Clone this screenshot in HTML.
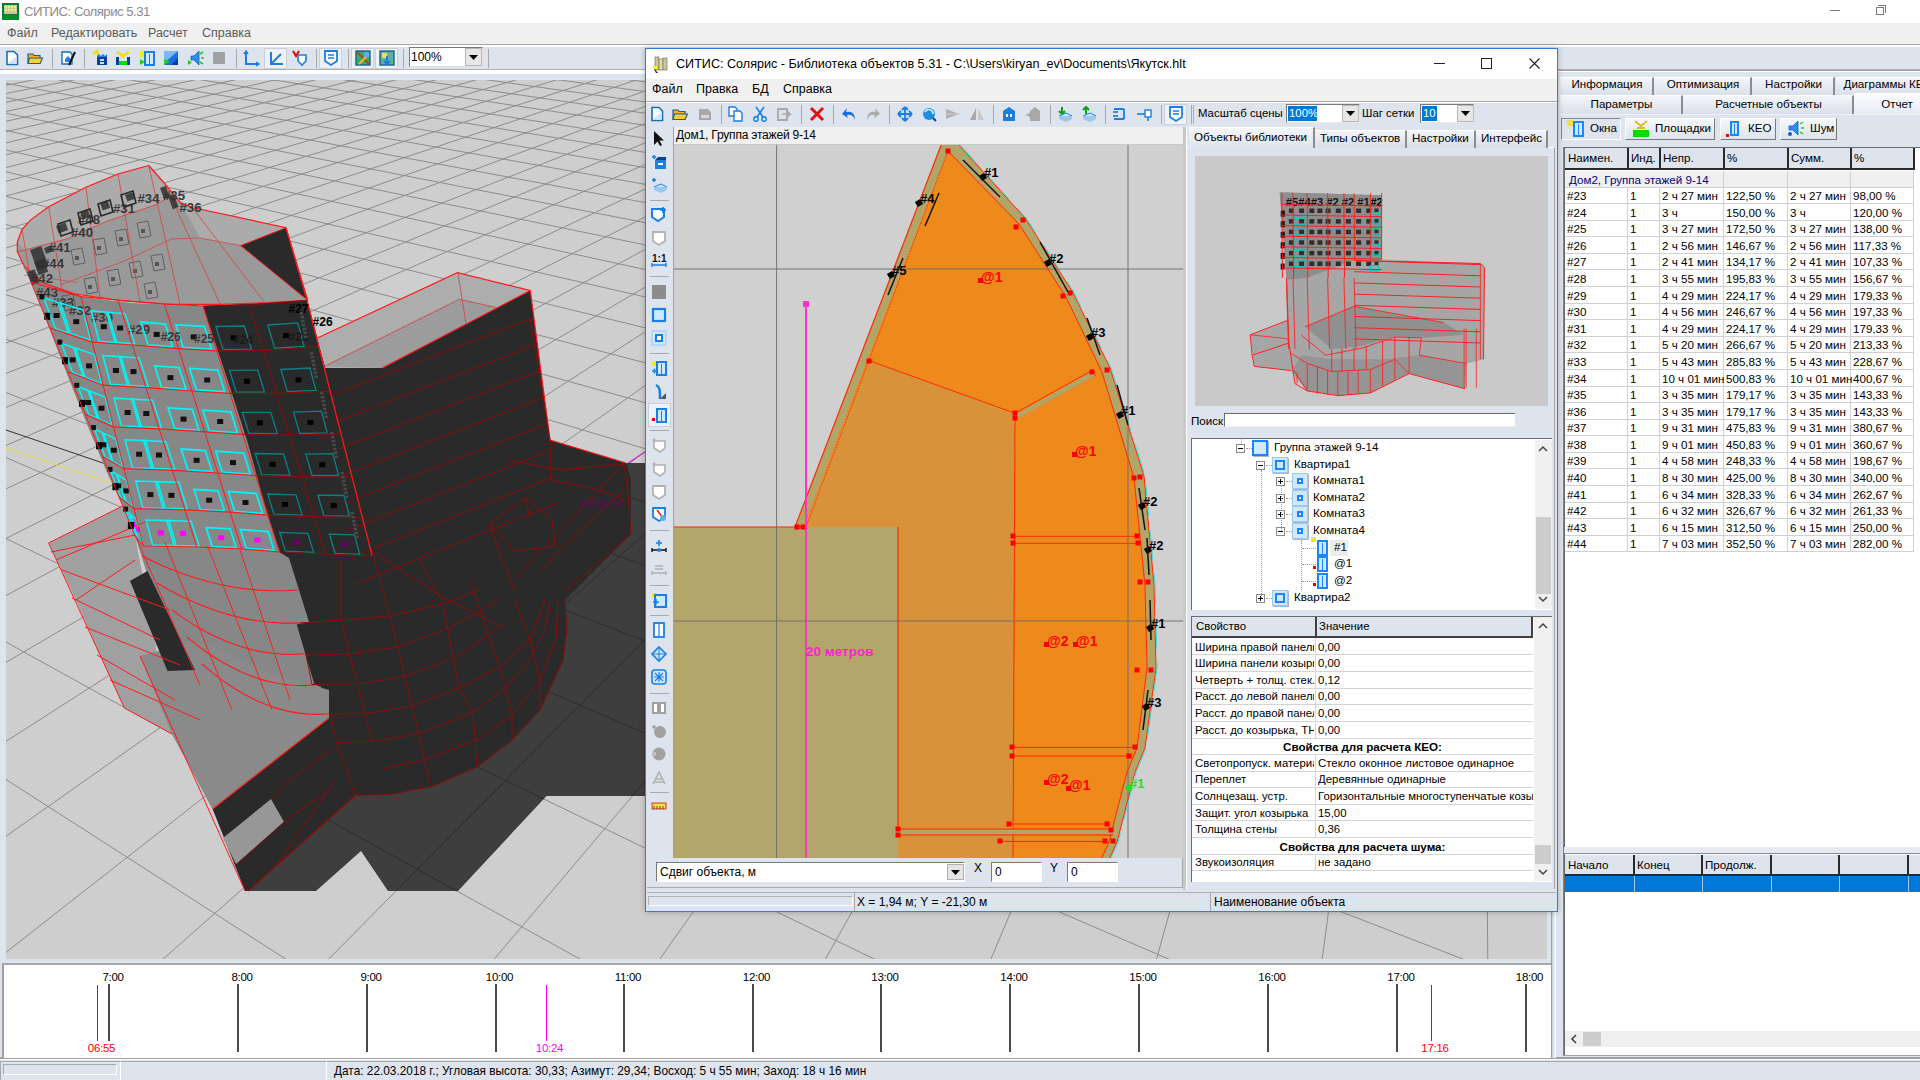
<!DOCTYPE html>
<html><head><meta charset="utf-8"><title>СИТИС: Солярис 5.31</title><style>
*{box-sizing:border-box}
html,body{margin:0;padding:0;width:1920px;height:1080px;overflow:hidden;background:#dde4ee;font-family:"Liberation Sans", sans-serif;font-size:12px;color:#000}
.a{position:absolute}
.t{position:absolute;white-space:nowrap;line-height:1}
svg{position:absolute;overflow:visible}
</style></head>
<body>
<div class="a" style="left:0px;top:0px;width:1920px;height:23px;background:#fff"></div><svg style="left:2px;top:3px" width="18" height="18" viewBox="0 0 18 18"><rect x="0" y="0" width="17" height="17" fill="#0a7a3a"/><rect x="2" y="2" width="13" height="9" fill="#c9c9a0"/><g fill="#f5f06a"><rect x="3" y="3" width="2" height="2"/><rect x="6" y="3" width="2" height="2"/><rect x="9" y="3" width="2" height="2"/><rect x="12" y="3" width="2" height="2"/><rect x="3" y="6" width="2" height="2"/><rect x="6" y="6" width="2" height="2"/><rect x="9" y="6" width="2" height="2"/><rect x="12" y="6" width="2" height="2"/></g><rect x="0" y="12" width="17" height="5" fill="#0c8a2a"/></svg><div class="t" style="left:24px;top:5px;font-size:13.2px;letter-spacing:-0.5px;color:#8c8c8c">СИТИС: Солярис 5.31</div><div class="a" style="left:1830px;top:10px;width:10px;height:1px;background:#777"></div><div class="a" style="left:1876px;top:7px;width:8px;height:8px;border:1px solid #777;background:#fff"></div><div class="a" style="left:1878px;top:5px;width:8px;height:8px;border-top:1px solid #777;border-right:1px solid #777"></div><div class="a" style="left:0px;top:23px;width:1920px;height:21px;background:#f0f0f0"></div><div class="t" style="left:7px;top:27px;font-size:12.5px;color:#5a5a5a">Файл</div><div class="t" style="left:51px;top:27px;font-size:12.5px;color:#5a5a5a">Редактировать</div><div class="t" style="left:148px;top:27px;font-size:12.5px;color:#5a5a5a">Расчет</div><div class="t" style="left:202px;top:27px;font-size:12.5px;color:#5a5a5a">Справка</div><div class="a" style="left:0px;top:44px;width:1920px;height:1px;background:#a8a8a8"></div><div class="a" style="left:0px;top:45px;width:1920px;height:2px;background:#fff"></div><div class="a" style="left:0px;top:47px;width:1920px;height:22px;background:#dde4ee"></div><div class="a" style="left:0px;top:69px;width:1920px;height:1px;background:#b0b0b0"></div><div class="a" style="left:0px;top:70px;width:1920px;height:4px;background:#fff"></div><div class="a" style="left:2px;top:74px;width:1918px;height:986px;background:#dde4ee"></div><div class="a" style="left:0px;top:1057px;width:1920px;height:2px;background:#a0a0a0"></div><div class="a" style="left:0px;top:1059px;width:1920px;height:21px;background:#dde4ee;border-top:1px solid #fff"></div><div class="a" style="left:0px;top:1061px;width:120px;height:19px;border-top:1px solid #a8a8a8;border-left:1px solid #a8a8a8"></div><div class="a" style="left:3px;top:1064px;width:114px;height:11px;border:1px solid #a8a8a8;border-bottom-color:#fff;border-right-color:#fff"></div><div class="a" style="left:120px;top:1061px;width:206px;height:19px;border-top:1px solid #a8a8a8;border-left:1px solid #fff"></div><div class="a" style="left:326px;top:1061px;width:1594px;height:19px;border-top:1px solid #a8a8a8;border-left:1px solid #fff"></div><div class="t" style="left:334px;top:1066px;font-size:11.85px">Дата: 22.03.2018 г.; Угловая высота: 30,33; Азимут: 29,34; Восход: 5 ч 55 мин; Заход: 18 ч 16 мин</div><svg style="left:6px;top:80px" width="1541" height="879" viewBox="0 0 1541 879"><defs><clipPath id="cv"><rect x="0" y="0" width="1541" height="879"/></clipPath></defs><g clip-path="url(#cv)"><rect x="0" y="0" width="1541" height="879" fill="#cecece"/><path d="M1594.3 -140.5L-37429.8 -45302.4M1573.5 -141.4L29966.1 39213.2M1552.9 -142.3L9417.3 13444.8M1532.6 -143.3L5095.4 8025.0M1512.6 -144.2L3220.3 5673.6M1492.8 -145.1L2172.6 4359.7M1473.3 -145.9L1503.6 3520.8M1454.0 -146.8L1039.4 2938.7M1435.0 -147.7L698.5 2511.1M1416.2 -148.5L437.4 2183.8M1397.7 -149.4L231.2 1925.2M1379.4 -150.2L64.1 1715.6M1361.3 -151.0L-74.0 1542.4M1343.4 -151.8L-190.1 1396.9M1325.8 -152.6L-289.0 1272.8M1308.3 -153.4L-374.3 1165.8M1291.1 -154.2L-448.6 1072.6M1274.1 -155.0L-514.0 990.7M1257.3 -155.7L-571.9 918.1M1240.7 -156.5L-623.5 853.4M1224.3 -157.2L-669.8 795.3M1208.1 -157.9L-711.7 742.8M1192.1 -158.7L-749.6 695.2M1176.2 -159.4L-784.2 651.9M1160.6 -160.1L-815.8 612.2M1145.1 -160.8L-844.9 575.7M1129.8 -161.5L-871.7 542.1M1114.7 -162.2L-896.4 511.1M1099.7 -162.8L-919.4 482.3M1085.0 -163.5L-940.8 455.5M1070.3 -164.2L-960.7 430.5M1055.9 -164.8L-979.3 407.2M1041.6 -165.5L-996.7 385.4M1027.5 -166.1L-1013.1 364.9M1013.5 -166.8L-1028.4 345.6M999.6 -167.4L-1042.9 327.4M986.0 -168.0L-1056.6 310.3M972.4 -168.6L-1069.5 294.0M959.0 -169.2L-1081.8 278.7M945.8 -169.8L-1093.4 264.2M932.7 -170.4L-1104.4 250.3M919.7 -171.0L-1114.8 237.2M906.9 -171.6L-1124.8 224.7M894.2 -172.2L-1134.3 212.8M881.6 -172.7L-1143.4 201.4M869.2 -173.3L-1152.0 190.6M856.9 -173.8L-1160.3 180.2M844.7 -174.4L-1168.2 170.3M832.6 -174.9L-1175.8 160.8M820.7 -175.5L-1183.1 151.7M808.9 -176.0L-1190.0 142.9M797.2 -176.5L-1196.7 134.5M785.6 -177.1L-1203.2 126.4M774.1 -177.6L-1209.4 118.6M762.8 -178.1L-1215.4 111.2M751.5 -178.6L-1221.1 104.0M740.4 -179.1L-1226.6 97.0M729.4 -179.6L-1232.0 90.3M718.4 -180.1L-1237.1 83.8M707.6 -180.6L-1242.1 77.6M696.9 -181.1L-1246.9 71.6M686.3 -181.6L-1251.6 65.7M675.8 -182.0L-1256.1 60.1M665.4 -182.5L-1260.5 54.6M655.1 -183.0L-1264.7 49.3M644.9 -183.4L-1268.8 44.2M1594.3 -140.5L634.8 -183.9M1595.8 -138.7L627.8 -183.1M1597.3 -137.0L620.7 -182.2M1598.9 -135.2L613.4 -181.4M1600.5 -133.4L606.1 -180.5M1602.1 -131.5L598.6 -179.7M1603.8 -129.5L591.0 -178.8M1605.5 -127.6L583.3 -177.9M1607.2 -125.5L575.4 -177.0M1609.0 -123.4L567.4 -176.0M1610.9 -121.3L559.2 -175.1M1612.8 -119.1L550.9 -174.1M1614.8 -116.8L542.5 -173.1M1616.8 -114.5L533.8 -172.1M1618.9 -112.1L525.1 -171.1M1621.0 -109.6L516.1 -170.0M1623.2 -107.1L507.0 -169.0M1625.4 -104.4L497.7 -167.9M1627.8 -101.7L488.2 -166.8M1630.2 -99.0L478.6 -165.6M1632.7 -96.1L468.7 -164.5M1635.2 -93.1L458.7 -163.3M1637.9 -90.1L448.4 -162.1M1640.6 -86.9L438.0 -160.9M1643.4 -83.7L427.3 -159.6M1646.3 -80.3L416.4 -158.4M1649.3 -76.8L405.3 -157.1M1652.5 -73.2L393.9 -155.7M1655.7 -69.4L382.3 -154.4M1659.1 -65.6L370.4 -153.0M1662.5 -61.5L358.3 -151.6M1666.1 -57.3L345.9 -150.1M1669.9 -53.0L333.2 -148.6M1673.8 -48.5L320.3 -147.1M1677.8 -43.8L307.0 -145.6M1682.1 -38.9L293.5 -144.0M1686.5 -33.8L279.6 -142.4M1691.0 -28.5L265.4 -140.7M1695.8 -23.0L250.8 -139.0M1700.8 -17.2L235.9 -137.2M1706.1 -11.2L220.6 -135.5M1711.5 -4.8L204.9 -133.6M1717.3 1.8L188.9 -131.7M1723.3 8.8L172.4 -129.8M1729.6 16.1L155.5 -127.8M1736.2 23.8L138.1 -125.8M1743.2 31.9L120.3 -123.7M1750.6 40.4L102.0 -121.6M1758.4 49.4L83.2 -119.4M1766.7 59.0L63.9 -117.1M1775.4 69.1L44.0 -114.8M1784.6 79.8L23.6 -112.4M1794.5 91.2L2.5 -110.0M1805.0 103.3L-19.1 -107.4M1816.2 116.3L-41.4 -104.8M1828.1 130.1L-64.4 -102.1M1841.0 145.0L-88.1 -99.4M1854.8 161.0L-112.5 -96.5M1869.6 178.2L-137.7 -93.6M1885.7 196.7L-163.7 -90.5M1903.1 216.9L-190.6 -87.4M1922.1 238.8L-218.4 -84.1M1942.8 262.8L-247.1 -80.8M1965.5 289.1L-276.8 -77.3M1990.5 318.0L-307.5 -73.7M2018.1 350.0L-339.4 -70.0M2048.9 385.6L-372.4 -66.1M2083.4 425.5L-406.6 -62.1M2122.2 470.5L-442.2 -57.9M2166.3 521.5L-479.1 -53.6M2216.9 580.0L-517.4 -49.1M2275.3 647.6L-557.3 -44.5M2343.7 726.8L-598.8 -39.6M2424.9 820.8L-642.1 -34.6M2522.8 934.0L-687.2 -29.3M2643.0 1073.2L-734.2 -23.8M2794.4 1248.3L-783.4 -18.0M2990.6 1475.4L-834.8 -12.0M3255.3 1781.7L-888.6 -5.7M3631.7 2217.4L-945.0 0.9M4209.6 2886.1L-1004.1 7.8M5209.7 4043.6L-1066.2 15.1M7361.4 6533.7L-1131.5 22.7M15351.9 15780.9L-1200.3 30.7M-37429.8 -45302.4L-1272.7 39.2" stroke="#8c8c8c" stroke-width="1" fill="none"/><polyline points="0.0,368.0 219.0,441.0" fill="none" stroke="#e8e040" stroke-width="1" /><polyline points="0.0,350.0 229.0,428.0" fill="none" stroke="#333" stroke-width="1" /><polyline points="494.0,588.0 639.0,651.0" fill="none" stroke="#1020a0" stroke-width="1.4" /><polyline points="622.0,383.0 639.0,372.0" fill="none" stroke="#e020e0" stroke-width="1.2" /><polygon points="239.0,811.0 310.0,811.0 355.0,771.0 382.0,811.0 452.0,811.0 540.5,716.0 639.0,716.0 639.0,383.0 620.0,383.0 544.0,360.0 524.0,210.0 319.0,288.0 234.0,400.0 274.0,543.0 294.0,660.0" fill="#3e3e3e" /><clipPath id="shc"><polygon points="239.0,811.0 310.0,811.0 355.0,771.0 382.0,811.0 452.0,811.0 540.5,716.0 639.0,716.0 639.0,383.0 620.0,383.0 544.0,360.0 524.0,210.0 319.0,288.0 199.0,226.0"/></clipPath><path d="M1594.3 -140.5L-37429.8 -45302.4M1573.5 -141.4L29966.1 39213.2M1552.9 -142.3L9417.3 13444.8M1532.6 -143.3L5095.4 8025.0M1512.6 -144.2L3220.3 5673.6M1492.8 -145.1L2172.6 4359.7M1473.3 -145.9L1503.6 3520.8M1454.0 -146.8L1039.4 2938.7M1435.0 -147.7L698.5 2511.1M1416.2 -148.5L437.4 2183.8M1397.7 -149.4L231.2 1925.2M1379.4 -150.2L64.1 1715.6M1361.3 -151.0L-74.0 1542.4M1343.4 -151.8L-190.1 1396.9M1325.8 -152.6L-289.0 1272.8M1308.3 -153.4L-374.3 1165.8M1291.1 -154.2L-448.6 1072.6M1274.1 -155.0L-514.0 990.7M1257.3 -155.7L-571.9 918.1M1240.7 -156.5L-623.5 853.4M1224.3 -157.2L-669.8 795.3M1208.1 -157.9L-711.7 742.8M1192.1 -158.7L-749.6 695.2M1176.2 -159.4L-784.2 651.9M1160.6 -160.1L-815.8 612.2M1145.1 -160.8L-844.9 575.7M1129.8 -161.5L-871.7 542.1M1114.7 -162.2L-896.4 511.1M1099.7 -162.8L-919.4 482.3M1085.0 -163.5L-940.8 455.5M1070.3 -164.2L-960.7 430.5M1055.9 -164.8L-979.3 407.2M1041.6 -165.5L-996.7 385.4M1027.5 -166.1L-1013.1 364.9M1013.5 -166.8L-1028.4 345.6M999.6 -167.4L-1042.9 327.4M986.0 -168.0L-1056.6 310.3M972.4 -168.6L-1069.5 294.0M959.0 -169.2L-1081.8 278.7M945.8 -169.8L-1093.4 264.2M932.7 -170.4L-1104.4 250.3M919.7 -171.0L-1114.8 237.2M906.9 -171.6L-1124.8 224.7M894.2 -172.2L-1134.3 212.8M881.6 -172.7L-1143.4 201.4M869.2 -173.3L-1152.0 190.6M856.9 -173.8L-1160.3 180.2M844.7 -174.4L-1168.2 170.3M832.6 -174.9L-1175.8 160.8M820.7 -175.5L-1183.1 151.7M808.9 -176.0L-1190.0 142.9M797.2 -176.5L-1196.7 134.5M785.6 -177.1L-1203.2 126.4M774.1 -177.6L-1209.4 118.6M762.8 -178.1L-1215.4 111.2M751.5 -178.6L-1221.1 104.0M740.4 -179.1L-1226.6 97.0M729.4 -179.6L-1232.0 90.3M718.4 -180.1L-1237.1 83.8M707.6 -180.6L-1242.1 77.6M696.9 -181.1L-1246.9 71.6M686.3 -181.6L-1251.6 65.7M675.8 -182.0L-1256.1 60.1M665.4 -182.5L-1260.5 54.6M655.1 -183.0L-1264.7 49.3M644.9 -183.4L-1268.8 44.2M1594.3 -140.5L634.8 -183.9M1595.8 -138.7L627.8 -183.1M1597.3 -137.0L620.7 -182.2M1598.9 -135.2L613.4 -181.4M1600.5 -133.4L606.1 -180.5M1602.1 -131.5L598.6 -179.7M1603.8 -129.5L591.0 -178.8M1605.5 -127.6L583.3 -177.9M1607.2 -125.5L575.4 -177.0M1609.0 -123.4L567.4 -176.0M1610.9 -121.3L559.2 -175.1M1612.8 -119.1L550.9 -174.1M1614.8 -116.8L542.5 -173.1M1616.8 -114.5L533.8 -172.1M1618.9 -112.1L525.1 -171.1M1621.0 -109.6L516.1 -170.0M1623.2 -107.1L507.0 -169.0M1625.4 -104.4L497.7 -167.9M1627.8 -101.7L488.2 -166.8M1630.2 -99.0L478.6 -165.6M1632.7 -96.1L468.7 -164.5M1635.2 -93.1L458.7 -163.3M1637.9 -90.1L448.4 -162.1M1640.6 -86.9L438.0 -160.9M1643.4 -83.7L427.3 -159.6M1646.3 -80.3L416.4 -158.4M1649.3 -76.8L405.3 -157.1M1652.5 -73.2L393.9 -155.7M1655.7 -69.4L382.3 -154.4M1659.1 -65.6L370.4 -153.0M1662.5 -61.5L358.3 -151.6M1666.1 -57.3L345.9 -150.1M1669.9 -53.0L333.2 -148.6M1673.8 -48.5L320.3 -147.1M1677.8 -43.8L307.0 -145.6M1682.1 -38.9L293.5 -144.0M1686.5 -33.8L279.6 -142.4M1691.0 -28.5L265.4 -140.7M1695.8 -23.0L250.8 -139.0M1700.8 -17.2L235.9 -137.2M1706.1 -11.2L220.6 -135.5M1711.5 -4.8L204.9 -133.6M1717.3 1.8L188.9 -131.7M1723.3 8.8L172.4 -129.8M1729.6 16.1L155.5 -127.8M1736.2 23.8L138.1 -125.8M1743.2 31.9L120.3 -123.7M1750.6 40.4L102.0 -121.6M1758.4 49.4L83.2 -119.4M1766.7 59.0L63.9 -117.1M1775.4 69.1L44.0 -114.8M1784.6 79.8L23.6 -112.4M1794.5 91.2L2.5 -110.0M1805.0 103.3L-19.1 -107.4M1816.2 116.3L-41.4 -104.8M1828.1 130.1L-64.4 -102.1M1841.0 145.0L-88.1 -99.4M1854.8 161.0L-112.5 -96.5M1869.6 178.2L-137.7 -93.6M1885.7 196.7L-163.7 -90.5M1903.1 216.9L-190.6 -87.4M1922.1 238.8L-218.4 -84.1M1942.8 262.8L-247.1 -80.8M1965.5 289.1L-276.8 -77.3M1990.5 318.0L-307.5 -73.7M2018.1 350.0L-339.4 -70.0M2048.9 385.6L-372.4 -66.1M2083.4 425.5L-406.6 -62.1M2122.2 470.5L-442.2 -57.9M2166.3 521.5L-479.1 -53.6M2216.9 580.0L-517.4 -49.1M2275.3 647.6L-557.3 -44.5M2343.7 726.8L-598.8 -39.6M2424.9 820.8L-642.1 -34.6M2522.8 934.0L-687.2 -29.3M2643.0 1073.2L-734.2 -23.8M2794.4 1248.3L-783.4 -18.0M2990.6 1475.4L-834.8 -12.0M3255.3 1781.7L-888.6 -5.7M3631.7 2217.4L-945.0 0.9M4209.6 2886.1L-1004.1 7.8M5209.7 4043.6L-1066.2 15.1M7361.4 6533.7L-1131.5 22.7M15351.9 15780.9L-1200.3 30.7M-37429.8 -45302.4L-1272.7 39.2" stroke="#2c2c2c" stroke-width="1" fill="none" clip-path="url(#shc)"/><polygon points="197.0,226.0 301.0,220.0 319.5,288.0 376.0,288.0 524.3,210.5 544.0,360.0 620.0,383.0 625.0,400.0 625.0,454.0 559.0,520.0 561.0,550.0 557.0,581.0 534.0,630.0 506.0,660.5 471.0,687.0 426.4,706.4 383.6,714.5 349.0,715.5 242.0,811.0 239.0,811.0 206.6,729.0 294.0,660.0 274.0,543.0 234.0,400.0 197.0,226.0" fill="#2a2a2a" /><polygon points="42.6,463.0 116.7,426.0 129.0,455.0 166.0,654.0 118.4,628.0 94.0,575.0 70.0,520.0" fill="#a0a0a0" /><polygon points="17.0,186.0 25.0,202.0 41.8,244.4 60.3,292.6 82.5,348.0 101.0,392.6 116.7,426.0 131.0,462.0 142.0,497.0 154.0,530.0 166.0,654.0 206.6,729.0 323.0,638.0 323.0,634.4 315.0,606.7 308.4,604.4 290.7,544.4 303.0,542.0 283.0,478.0 274.0,472.5 261.5,435.0 246.5,380.0 241.8,363.0 227.0,316.7 213.0,274.0 197.0,226.0 125.0,223.0 75.0,216.7" fill="#878787" /><polygon points="134.0,576.0 166.0,654.0 206.6,729.0 323.0,638.0 323.0,610.0 254.0,590.0 194.0,560.0" fill="#8a8a8a" /><polygon points="124.0,501.0 141.5,491.0 189.0,590.0 161.5,591.0" fill="#2a2a2a" /><polygon points="217.0,758.0 265.0,719.0 278.0,742.0 230.0,784.0" fill="#979797" /><polyline points="42.6,463.0 116.7,426.0" fill="none" stroke="#ff1a1a" stroke-width="1" /><polyline points="42.6,463.0 118.4,628.0" fill="none" stroke="#ff1a1a" stroke-width="1" /><polyline points="45.0,472.0 129.0,455.0" fill="none" stroke="#ff1a1a" stroke-width="1" /><polyline points="56.0,490.0 164.0,530.0" fill="none" stroke="#ff1a1a" stroke-width="1" /><polyline points="50.0,480.0 144.0,440.0" fill="none" stroke="#ff1a1a" stroke-width="1" /><polyline points="66.0,518.0 154.0,560.0" fill="none" stroke="#ff1a1a" stroke-width="1" /><polyline points="79.0,547.0 174.0,585.0" fill="none" stroke="#ff1a1a" stroke-width="1" /><polyline points="91.0,575.0 169.0,620.0" fill="none" stroke="#ff1a1a" stroke-width="1" /><polyline points="104.0,600.0 194.0,640.0" fill="none" stroke="#ff1a1a" stroke-width="1" /><polyline points="70.0,520.0 129.0,480.0" fill="none" stroke="#ff1a1a" stroke-width="1" /><polyline points="118.4,628.0 166.0,654.0" fill="none" stroke="#ff1a1a" stroke-width="1" /><polyline points="134.0,576.0 239.0,811.0" fill="none" stroke="#ff1a1a" stroke-width="1" /><polygon points="142.8,85.5 112.0,94.0 79.9,107.3 42.7,126.7 25.0,139.6 16.1,149.3 11.3,162.2 11.3,171.9 18.5,186.4 36.3,202.5 68.6,213.8 117.0,221.0 165.4,224.3 213.9,224.3 262.3,222.7 301.0,220.3 280.0,147.7 186.4,127.5 175.0,123.4 159.0,104.0" fill="#9a9a9a" /><polygon points="142.8,85.5 112.0,94.0 79.9,107.3 42.7,126.7 25.0,139.6 16.1,149.3 11.3,162.2 19.0,170.0 34.0,166.0 60.5,159.0 100.9,141.2 149.3,125.0 165.0,116.0 186.4,127.5 280.0,147.7 234.7,165.6 194.0,158.0 175.0,123.4 159.0,104.0" fill="#ababab" /><polygon points="234.7,165.6 280.0,147.7 301.9,220.5" fill="#2a2a2a" /><polygon points="65.0,170.0 76.0,168.0 79.0,183.0 68.0,185.0" fill="none" stroke="#606060" stroke-width="1"/><rect x="69.0" y="176.0" width="4" height="4" fill="#555"/><polygon points="87.0,160.0 98.0,158.0 101.0,173.0 90.0,175.0" fill="none" stroke="#606060" stroke-width="1"/><rect x="91.0" y="166.0" width="4" height="4" fill="#555"/><polygon points="109.0,151.0 120.0,149.0 123.0,164.0 112.0,166.0" fill="none" stroke="#606060" stroke-width="1"/><rect x="113.0" y="157.0" width="4" height="4" fill="#555"/><polygon points="131.0,143.0 142.0,141.0 145.0,156.0 134.0,158.0" fill="none" stroke="#606060" stroke-width="1"/><rect x="135.0" y="149.0" width="4" height="4" fill="#555"/><polygon points="78.0,199.0 89.0,197.0 92.0,212.0 81.0,214.0" fill="none" stroke="#606060" stroke-width="1"/><rect x="82.0" y="205.0" width="4" height="4" fill="#555"/><polygon points="101.0,191.0 112.0,189.0 115.0,204.0 104.0,206.0" fill="none" stroke="#606060" stroke-width="1"/><rect x="105.0" y="197.0" width="4" height="4" fill="#555"/><polygon points="123.0,183.0 134.0,181.0 137.0,196.0 126.0,198.0" fill="none" stroke="#606060" stroke-width="1"/><rect x="127.0" y="189.0" width="4" height="4" fill="#555"/><polygon points="145.0,176.0 156.0,174.0 159.0,189.0 148.0,191.0" fill="none" stroke="#606060" stroke-width="1"/><rect x="149.0" y="182.0" width="4" height="4" fill="#555"/><polygon points="56.0,216.0 67.0,214.0 70.0,229.0 59.0,231.0" fill="none" stroke="#606060" stroke-width="1"/><rect x="60.0" y="222.0" width="4" height="4" fill="#555"/><polygon points="138.0,204.0 149.0,202.0 152.0,217.0 141.0,219.0" fill="none" stroke="#606060" stroke-width="1"/><rect x="142.0" y="210.0" width="4" height="4" fill="#555"/><polyline points="142.8,85.5 112.0,94.0 79.9,107.3 42.7,126.7 25.0,139.6 16.1,149.3 11.3,162.2 11.3,171.9 18.5,186.4 36.3,202.5 68.6,213.8 117.0,221.0 165.4,224.3 213.9,224.3 262.3,222.7 301.0,220.3 280.0,147.7 186.4,127.5 175.0,123.4 159.0,104.0 142.8,85.5" fill="none" stroke="#ff1a1a" stroke-width="1.2" /><polyline points="11.3,171.9 34.0,166.0 60.5,159.0 100.9,141.2 149.3,125.0 165.0,116.0" fill="none" stroke="#e04040" stroke-width="0.9" /><polyline points="18.0,195.0 71.8,202.5" fill="none" stroke="#c04040" stroke-width="0.6" /><polyline points="54.0,205.0 117.0,181.6 165.4,159.0 194.0,158.0 234.7,165.6" fill="none" stroke="#d04848" stroke-width="0.8" /><polyline points="16.0,149.0 25.0,202.0" fill="none" stroke="#d84040" stroke-width="0.8" /><polyline points="42.7,126.7 56.0,209.0" fill="none" stroke="#d84040" stroke-width="0.8" /><polyline points="79.9,107.3 94.0,217.0" fill="none" stroke="#d84040" stroke-width="0.8" /><polyline points="112.0,94.0 134.0,222.0" fill="none" stroke="#d84040" stroke-width="0.8" /><polyline points="142.8,85.5 174.0,224.0" fill="none" stroke="#d84040" stroke-width="0.8" /><polyline points="159.0,104.0 214.0,224.0" fill="none" stroke="#d84040" stroke-width="0.8" /><polyline points="186.4,127.5 259.0,223.0" fill="none" stroke="#d84040" stroke-width="0.8" /><polyline points="234.7,165.6 280.0,147.7 301.9,220.5 234.7,165.6" fill="none" stroke="#ff1a1a" stroke-width="1" /><text x="157" y="120" font-family="Liberation Sans" font-weight="bold" font-size="12.5" fill="#383838" textLength="22" lengthAdjust="spacingAndGlyphs">#35</text><text x="173.5" y="131.5" font-family="Liberation Sans" font-weight="bold" font-size="12.5" fill="#383838" textLength="22" lengthAdjust="spacingAndGlyphs">#36</text><text x="131.5" y="123" font-family="Liberation Sans" font-weight="bold" font-size="12.5" fill="#383838" textLength="22" lengthAdjust="spacingAndGlyphs">#34</text><text x="107" y="133" font-family="Liberation Sans" font-weight="bold" font-size="12.5" fill="#383838" textLength="22" lengthAdjust="spacingAndGlyphs">#31</text><text x="72" y="144" font-family="Liberation Sans" font-weight="bold" font-size="12.5" fill="#383838" textLength="22" lengthAdjust="spacingAndGlyphs">#48</text><text x="65" y="157" font-family="Liberation Sans" font-weight="bold" font-size="12.5" fill="#383838" textLength="22" lengthAdjust="spacingAndGlyphs">#40</text><text x="42.7" y="172" font-family="Liberation Sans" font-weight="bold" font-size="12.5" fill="#383838" textLength="22" lengthAdjust="spacingAndGlyphs">#41</text><text x="36" y="188" font-family="Liberation Sans" font-weight="bold" font-size="12.5" fill="#383838" textLength="22" lengthAdjust="spacingAndGlyphs">#44</text><text x="25" y="202.5" font-family="Liberation Sans" font-weight="bold" font-size="12.5" fill="#383838" textLength="22" lengthAdjust="spacingAndGlyphs">#42</text><text x="30" y="217" font-family="Liberation Sans" font-weight="bold" font-size="12.5" fill="#383838" textLength="22" lengthAdjust="spacingAndGlyphs">#43</text><text x="46" y="227" font-family="Liberation Sans" font-weight="bold" font-size="12.5" fill="#383838" textLength="22" lengthAdjust="spacingAndGlyphs">#33</text><text x="63" y="235" font-family="Liberation Sans" font-weight="bold" font-size="12.5" fill="#383838" textLength="22" lengthAdjust="spacingAndGlyphs">#32</text><text x="85" y="242" font-family="Liberation Sans" font-weight="bold" font-size="12.5" fill="#383838" textLength="22" lengthAdjust="spacingAndGlyphs">#30</text><text x="122" y="254" font-family="Liberation Sans" font-weight="bold" font-size="12.5" fill="#383838" textLength="22" lengthAdjust="spacingAndGlyphs">#29</text><rect x="24" y="170" width="12" height="22" fill="#303030" opacity="0.85" transform="rotate(-20 24 170)"/><rect x="28" y="182" width="10" height="14" fill="#303030" opacity="0.85" transform="rotate(-20 28 182)"/><rect x="21" y="192" width="8" height="14" fill="#303030" opacity="0.85" transform="rotate(-20 21 192)"/><rect x="38" y="168" width="8" height="6" fill="#303030" opacity="0.85" transform="rotate(-20 38 168)"/><rect x="50" y="146" width="10" height="8" fill="#303030" opacity="0.85" transform="rotate(-20 50 146)"/><rect x="74" y="132" width="8" height="8" fill="#303030" opacity="0.85" transform="rotate(-20 74 132)"/><rect x="94" y="123" width="8" height="8" fill="#303030" opacity="0.85" transform="rotate(-20 94 123)"/><rect x="119" y="115" width="8" height="7" fill="#303030" opacity="0.85" transform="rotate(-20 119 115)"/><rect x="154" y="108" width="6" height="12" fill="#303030" opacity="0.85" transform="rotate(-20 154 108)"/><rect x="162" y="116" width="6" height="14" fill="#303030" opacity="0.85" transform="rotate(-20 162 116)"/><polygon points="52.0,144.0 64.0,140.0 67.0,152.0 55.0,156.0" fill="none" stroke="#2a2a2a" stroke-width="1.6"/><polygon points="72.0,133.0 84.0,129.0 87.0,141.0 75.0,145.0" fill="none" stroke="#2a2a2a" stroke-width="1.6"/><polygon points="92.0,124.0 104.0,120.0 107.0,132.0 95.0,136.0" fill="none" stroke="#2a2a2a" stroke-width="1.6"/><polygon points="115.0,115.0 127.0,111.0 130.0,123.0 118.0,127.0" fill="none" stroke="#2a2a2a" stroke-width="1.6"/><polygon points="311.4,258.0 451.4,192.7 524.3,210.5 376.2,288.0 319.5,288.0" fill="#adadad" /><polygon points="318.5,286.3 453.3,219.3 489.8,227.4 376.2,288.0" fill="#9c9c9c" /><polyline points="311.4,258.0 451.4,192.7 524.3,210.5 544.0,360.0 620.0,383.0" fill="none" stroke="#ff1a1a" stroke-width="1.2" /><polyline points="376.2,288.0 524.3,210.5" fill="none" stroke="#ff1a1a" stroke-width="1.2" /><polyline points="318.5,286.3 453.3,219.3 489.8,227.4" fill="none" stroke="#d04040" stroke-width="0.8" /><polyline points="451.9,192.9 460.0,243.6" fill="none" stroke="#d04040" stroke-width="0.8" /><polyline points="326.0,315.0 527.9,237.5" fill="none" stroke="#8c0c0c" stroke-width="1" /><polyline points="329.3,342.0 531.4,264.0" fill="none" stroke="#8c0c0c" stroke-width="1" /><polyline points="332.6,369.0 534.8,290.5" fill="none" stroke="#8c0c0c" stroke-width="1" /><polyline points="335.9,396.0 538.3,317.0" fill="none" stroke="#8c0c0c" stroke-width="1" /><polyline points="339.2,423.0 541.8,343.5" fill="none" stroke="#8c0c0c" stroke-width="1" /><polyline points="342.5,450.0 545.3,370.0" fill="none" stroke="#8c0c0c" stroke-width="1" /><polyline points="345.8,477.0 548.8,396.5" fill="none" stroke="#8c0c0c" stroke-width="1" /><polyline points="349.1,504.0 552.3,423.0" fill="none" stroke="#8c0c0c" stroke-width="1" /><polygon points="134.8,242.0 159.3,244.1 166.5,266.8 142.1,264.9" fill="none" stroke="#00f4f4" stroke-width="1.8"/><rect x="147.7" y="251.9" width="6" height="5" fill="#111"/><polygon points="169.9,244.8 198.4,246.3 205.5,269.1 177.1,267.5" fill="none" stroke="#00f4f4" stroke-width="1.8"/><rect x="184.7" y="254.4" width="6" height="5" fill="#111"/><polygon points="85.2,230.9 101.9,232.3 110.7,262.5 93.2,261.2" fill="none" stroke="#00f4f4" stroke-width="1.6"/><rect x="94.8" y="244.2" width="6" height="5" fill="#111"/><polygon points="100.4,232.2 119.1,233.7 128.7,263.8 109.1,262.4" fill="none" stroke="#00f4f4" stroke-width="1.6"/><rect x="111.1" y="245.5" width="6" height="5" fill="#111"/><polygon points="54.5,223.1 77.0,229.9 84.7,260.3 64.7,253.7" fill="none" stroke="#00f4f4" stroke-width="1.6"/><rect x="67.2" y="239.2" width="6" height="5" fill="#111"/><polygon points="37.8,218.0 52.1,222.3 62.5,253.0 49.7,248.8" fill="none" stroke="#00f4f4" stroke-width="1.6"/><rect x="47.6" y="233.0" width="6" height="5" fill="#111"/><polygon points="209.9,246.5 238.3,246.0 245.4,269.1 217.0,269.4" fill="none" stroke="#0a8088" stroke-width="1.3"/><rect x="224.6" y="255.2" width="6" height="5" fill="#000"/><polygon points="261.8,245.0 291.8,242.9 298.1,266.4 268.7,268.2" fill="none" stroke="#0a8088" stroke-width="1.3"/><rect x="277.1" y="253.1" width="6" height="5" fill="#000"/><rect x="38.2" y="232.8" width="6" height="7" fill="#000"/><rect x="33.4" y="214.3" width="5" height="5" fill="#111"/><polygon points="148.7,285.8 173.1,287.7 180.0,309.3 155.6,307.6" fill="none" stroke="#00f4f4" stroke-width="1.8"/><rect x="161.4" y="295.1" width="6" height="5" fill="#111"/><polygon points="183.6,288.4 212.0,290.1 218.7,311.7 190.4,310.0" fill="none" stroke="#00f4f4" stroke-width="1.8"/><rect x="198.2" y="297.5" width="6" height="5" fill="#111"/><polygon points="96.9,275.5 114.9,276.7 123.3,305.5 104.5,304.4" fill="none" stroke="#00f4f4" stroke-width="1.6"/><rect x="106.9" y="288.0" width="6" height="5" fill="#111"/><polygon points="113.3,276.6 133.2,278.0 142.3,306.6 121.6,305.4" fill="none" stroke="#00f4f4" stroke-width="1.6"/><rect x="124.5" y="289.1" width="6" height="5" fill="#111"/><polygon points="69.4,268.1 88.4,274.6 95.7,303.5 79.0,297.2" fill="none" stroke="#00f4f4" stroke-width="1.6"/><rect x="80.1" y="283.4" width="6" height="5" fill="#111"/><polygon points="55.3,263.3 67.4,267.4 77.3,296.5 66.6,292.5" fill="none" stroke="#00f4f4" stroke-width="1.6"/><rect x="63.6" y="277.4" width="6" height="5" fill="#111"/><polygon points="223.5,290.3 251.8,290.2 258.5,312.1 230.2,312.1" fill="none" stroke="#0a8088" stroke-width="1.3"/><rect x="238.0" y="298.7" width="6" height="5" fill="#000"/><polygon points="274.9,289.5 303.9,288.0 309.9,310.4 281.4,311.6" fill="none" stroke="#0a8088" stroke-width="1.3"/><rect x="289.5" y="297.4" width="6" height="5" fill="#000"/><rect x="56.0" y="277.2" width="6" height="7" fill="#000"/><rect x="51.3" y="259.6" width="5" height="5" fill="#111"/><polygon points="162.1,327.8 186.3,329.4 192.9,350.3 168.7,348.7" fill="none" stroke="#00f4f4" stroke-width="1.8"/><rect x="174.5" y="336.6" width="6" height="5" fill="#111"/><polygon points="196.8,330.1 225.0,331.9 231.5,352.9 203.4,351.0" fill="none" stroke="#00f4f4" stroke-width="1.8"/><rect x="211.2" y="339.0" width="6" height="5" fill="#111"/><polygon points="108.1,318.1 127.3,319.2 135.4,346.9 115.4,346.0" fill="none" stroke="#00f4f4" stroke-width="1.6"/><rect x="118.6" y="330.0" width="6" height="5" fill="#111"/><polygon points="125.6,319.1 146.7,320.3 155.5,347.9 133.6,346.8" fill="none" stroke="#00f4f4" stroke-width="1.6"/><rect x="137.3" y="331.0" width="6" height="5" fill="#111"/><polygon points="83.6,311.1 99.3,317.3 106.4,345.2 92.9,339.2" fill="none" stroke="#00f4f4" stroke-width="1.6"/><rect x="92.5" y="325.7" width="6" height="5" fill="#111"/><polygon points="72.0,306.5 82.0,310.4 91.5,338.6 82.9,334.7" fill="none" stroke="#00f4f4" stroke-width="1.6"/><rect x="79.1" y="320.0" width="6" height="5" fill="#111"/><polygon points="236.4,332.3 264.8,332.4 271.3,353.6 242.9,353.3" fill="none" stroke="#0a8088" stroke-width="1.3"/><rect x="250.8" y="340.4" width="6" height="5" fill="#000"/><polygon points="287.5,332.2 315.4,331.2 321.2,352.9 293.7,353.5" fill="none" stroke="#0a8088" stroke-width="1.3"/><rect x="301.5" y="339.9" width="6" height="5" fill="#000"/><rect x="73.0" y="319.8" width="6" height="7" fill="#000"/><rect x="68.3" y="302.8" width="5" height="5" fill="#111"/><polygon points="175.2,369.0 199.3,370.5 206.0,391.5 181.9,390.1" fill="none" stroke="#00f4f4" stroke-width="1.8"/><rect x="187.6" y="377.8" width="6" height="5" fill="#111"/><polygon points="209.7,371.2 237.8,373.1 244.3,394.2 216.3,392.2" fill="none" stroke="#00f4f4" stroke-width="1.8"/><rect x="224.0" y="380.1" width="6" height="5" fill="#111"/><polygon points="119.0,359.8 139.5,360.6 147.6,388.5 126.4,387.8" fill="none" stroke="#00f4f4" stroke-width="1.6"/><rect x="130.1" y="371.7" width="6" height="5" fill="#111"/><polygon points="137.6,360.5 159.8,361.6 168.7,389.3 145.7,388.5" fill="none" stroke="#00f4f4" stroke-width="1.6"/><rect x="150.0" y="372.5" width="6" height="5" fill="#111"/><polygon points="97.5,353.1 109.9,359.0 117.0,387.1 106.9,381.4" fill="none" stroke="#00f4f4" stroke-width="1.6"/><rect x="104.8" y="367.7" width="6" height="5" fill="#111"/><polygon points="88.3,348.7 96.2,352.5 105.8,380.8 99.3,377.1" fill="none" stroke="#00f4f4" stroke-width="1.6"/><rect x="94.4" y="362.3" width="6" height="5" fill="#111"/><polygon points="249.2,373.5 277.5,374.0 284.0,395.3 255.7,394.6" fill="none" stroke="#0a8088" stroke-width="1.3"/><rect x="263.6" y="381.9" width="6" height="5" fill="#000"/><polygon points="299.8,374.1 326.8,373.7 332.6,395.5 306.1,395.5" fill="none" stroke="#0a8088" stroke-width="1.3"/><rect x="313.3" y="382.2" width="6" height="5" fill="#000"/><rect x="90.0" y="362.2" width="6" height="7" fill="#000"/><rect x="85.0" y="345.1" width="5" height="5" fill="#111"/><polygon points="188.0,409.5 212.1,410.8 218.4,430.8 194.4,429.6" fill="none" stroke="#00f4f4" stroke-width="1.8"/><rect x="200.2" y="417.7" width="6" height="5" fill="#111"/><polygon points="222.4,411.4 250.3,413.5 256.6,433.5 228.7,431.4" fill="none" stroke="#00f4f4" stroke-width="1.8"/><rect x="236.5" y="420.0" width="6" height="5" fill="#111"/><polygon points="129.8,401.0 151.5,401.7 159.2,428.2 136.8,427.7" fill="none" stroke="#00f4f4" stroke-width="1.6"/><rect x="141.4" y="412.1" width="6" height="5" fill="#111"/><polygon points="149.5,401.6 172.9,402.4 181.3,428.9 157.2,428.2" fill="none" stroke="#00f4f4" stroke-width="1.6"/><rect x="162.4" y="412.8" width="6" height="5" fill="#111"/><polygon points="111.3,394.7 120.4,400.3 127.2,427.1 120.2,421.6" fill="none" stroke="#00f4f4" stroke-width="1.6"/><rect x="116.8" y="408.4" width="6" height="5" fill="#111"/><polygon points="104.5,390.5 110.3,394.1 119.4,421.0 114.9,417.6" fill="none" stroke="#00f4f4" stroke-width="1.6"/><rect x="109.3" y="403.3" width="6" height="5" fill="#111"/><polygon points="261.7,414.0 290.0,414.8 296.2,435.1 267.9,434.1" fill="none" stroke="#0a8088" stroke-width="1.3"/><rect x="276.0" y="422.0" width="6" height="5" fill="#000"/><polygon points="311.9,415.2 338.0,415.5 343.5,436.2 317.9,435.7" fill="none" stroke="#0a8088" stroke-width="1.3"/><rect x="324.8" y="423.1" width="6" height="5" fill="#000"/><rect x="106.4" y="403.2" width="6" height="7" fill="#000"/><rect x="101.5" y="386.9" width="5" height="5" fill="#111"/><polygon points="200.2,447.7 224.1,448.9 230.1,467.7 206.2,466.6" fill="none" stroke="#00f4f4" stroke-width="1.8"/><rect x="212.2" y="455.2" width="6" height="5" fill="#ff00ff"/><polygon points="234.4,449.5 262.2,451.7 268.0,470.5 240.3,468.3" fill="none" stroke="#00f4f4" stroke-width="1.8"/><rect x="248.3" y="457.5" width="6" height="5" fill="#ff00ff"/><polygon points="140.1,440.0 162.9,440.6 170.1,465.5 146.7,465.1" fill="none" stroke="#00f4f4" stroke-width="1.6"/><rect x="151.9" y="450.3" width="6" height="5" fill="#ff00ff"/><polygon points="160.8,440.5 185.2,441.2 193.1,466.0 168.0,465.5" fill="none" stroke="#00f4f4" stroke-width="1.6"/><rect x="174.0" y="450.8" width="6" height="5" fill="#ff00ff"/><polygon points="124.3,434.1 130.4,439.5 136.8,464.5 132.7,459.4" fill="none" stroke="#00f4f4" stroke-width="1.6"/><rect x="128.0" y="446.9" width="6" height="5" fill="#ff00ff"/><polygon points="119.8,430.1 123.7,433.6 132.2,458.8 129.6,455.5" fill="none" stroke="#00f4f4" stroke-width="1.6"/><rect x="123.3" y="442.0" width="6" height="5" fill="#ff00ff"/><polygon points="273.6,452.3 301.8,453.4 307.6,472.4 279.4,471.2" fill="none" stroke="#0a8088" stroke-width="1.3"/><rect x="287.6" y="459.8" width="6" height="5" fill="#6a006a"/><polygon points="323.4,454.1 348.5,454.9 353.7,474.3 329.0,473.3" fill="none" stroke="#0a8088" stroke-width="1.3"/><rect x="335.7" y="461.7" width="6" height="5" fill="#6a006a"/><rect x="121.9" y="441.9" width="6" height="7" fill="#000"/><rect x="117.1" y="426.6" width="5" height="5" fill="#111"/><polyline points="25.0,202.0 75.0,216.7 112.0,220.0 158.4,224.0 197.0,226.0" fill="none" stroke="#ff1a1a" stroke-width="1.2" /><polyline points="197.0,226.0 243.6,225.0 301.0,220.4" fill="none" stroke="#8c0c0c" stroke-width="1.2" /><polyline points="43.9,248.0 86.3,262.1 126.3,265.0 172.5,268.6 210.9,270.8" fill="none" stroke="#ff1a1a" stroke-width="1.2" /><polyline points="210.9,270.8 257.4,270.3 312.9,266.9" fill="none" stroke="#8c0c0c" stroke-width="1.2" /><polyline points="61.8,291.8 97.1,305.2 140.0,307.7 185.9,311.0 224.1,313.3" fill="none" stroke="#ff1a1a" stroke-width="1.2" /><polyline points="224.1,313.3 270.6,313.4 324.1,311.1" fill="none" stroke="#8c0c0c" stroke-width="1.2" /><polyline points="79.1,334.1 107.5,346.8 153.1,348.9 198.8,351.9 236.8,354.4" fill="none" stroke="#ff1a1a" stroke-width="1.2" /><polyline points="236.8,354.4 283.2,355.0 335.0,353.8" fill="none" stroke="#8c0c0c" stroke-width="1.2" /><polyline points="96.6,376.6 118.0,388.7 166.4,390.4 211.8,393.0 249.6,395.7" fill="none" stroke="#ff1a1a" stroke-width="1.2" /><polyline points="249.6,395.7 296.0,396.8 346.0,396.8" fill="none" stroke="#8c0c0c" stroke-width="1.2" /><polyline points="113.2,417.0 128.0,428.6 179.0,429.9 224.2,432.2 261.8,435.1" fill="none" stroke="#ff1a1a" stroke-width="1.2" /><polyline points="261.8,435.1 308.2,436.6 356.4,437.7" fill="none" stroke="#8c0c0c" stroke-width="1.2" /><polyline points="128.7,455.0 137.3,466.0 190.8,467.0 235.8,469.0 273.3,472.0" fill="none" stroke="#ff1a1a" stroke-width="1.2" /><polyline points="273.3,472.0 319.5,474.0 366.2,476.0" fill="none" stroke="#8c0c0c" stroke-width="1.2" /><polyline points="25.0,202.0 128.7,455.0" fill="none" stroke="#ff1a1a" stroke-width="1" /><polyline points="75.0,216.7 137.3,466.0" fill="none" stroke="#ff1a1a" stroke-width="1" /><polyline points="112.0,220.0 190.8,467.0" fill="none" stroke="#ff1a1a" stroke-width="1" /><polyline points="158.4,224.0 235.8,469.0" fill="none" stroke="#ff1a1a" stroke-width="1" /><polyline points="197.0,226.0 273.3,472.0" fill="none" stroke="#ff1a1a" stroke-width="1" /><polyline points="243.6,225.0 319.5,474.0" fill="none" stroke="#8c0c0c" stroke-width="1" /><polyline points="301.0,220.4 366.2,476.0" fill="none" stroke="#8c0c0c" stroke-width="1" /><polyline points="301.0,220.4 366.2,476.0" fill="none" stroke="#ff1a1a" stroke-width="1.2" /><text x="282.5" y="233" font-family="Liberation Sans" font-weight="bold" font-size="12" fill="#000">#27</text><text x="306.6" y="246" font-family="Liberation Sans" font-weight="bold" font-size="12" fill="#000">#26</text><text x="227" y="264" font-family="Liberation Sans" font-weight="bold" font-size="12" fill="#1a1a1a">#24</text><text x="282.5" y="261" font-family="Liberation Sans" font-weight="bold" font-size="12" fill="#1a1a1a">#23</text><text x="188" y="263" font-family="Liberation Sans" font-weight="bold" font-size="12" fill="#3a3a3a">#25</text><text x="154.7" y="261" font-family="Liberation Sans" font-weight="bold" font-size="12" fill="#3a3a3a">#26</text><polyline points="295.1,232.0 300.1,258.0" fill="none" stroke="#4a4a4a" stroke-width="3.5" stroke-dasharray="2.5 1.5"/><polyline points="305.3,272.0 310.3,298.0" fill="none" stroke="#4a4a4a" stroke-width="3.5" stroke-dasharray="2.5 1.5"/><polyline points="315.5,312.0 320.5,338.0" fill="none" stroke="#4a4a4a" stroke-width="3.5" stroke-dasharray="2.5 1.5"/><polyline points="325.7,352.0 330.7,378.0" fill="none" stroke="#4a4a4a" stroke-width="3.5" stroke-dasharray="2.5 1.5"/><polyline points="335.9,392.0 340.9,418.0" fill="none" stroke="#4a4a4a" stroke-width="3.5" stroke-dasharray="2.5 1.5"/><polyline points="346.1,432.0 351.1,458.0" fill="none" stroke="#4a4a4a" stroke-width="3.5" stroke-dasharray="2.5 1.5"/><polyline points="136.0,476.0 149.0,482.3 161.9,488.1 174.9,493.1 187.8,497.6 200.8,501.3 213.8,504.5 226.7,507.0 239.7,508.9 252.6,510.1 265.6,510.7 278.5,510.7 291.5,510.0" fill="none" stroke="#ff1a1a" stroke-width="1.1" /><polyline points="151.0,503.0 163.5,510.2 176.1,516.7 188.6,522.5 201.2,527.6 213.7,532.0 226.2,535.6 238.8,538.6 251.3,540.8 263.9,542.3 276.4,543.1 289.0,543.1 301.5,542.5" fill="none" stroke="#ff1a1a" stroke-width="1.1" /><polyline points="166.0,530.0 177.1,537.9 188.2,545.1 199.2,551.4 210.3,557.0 221.4,561.8 232.5,565.8 243.6,569.1 254.7,571.6 265.8,573.3 276.8,574.2 287.9,574.4 299.0,573.8" fill="none" stroke="#ff1a1a" stroke-width="1.1" /><polyline points="181.0,557.0 191.7,565.6 202.3,573.3 213.0,580.2 223.7,586.3 234.3,591.6 245.0,596.0 255.7,599.6 266.3,602.3 277.0,604.2 287.7,605.3 298.3,605.6 309.0,605.0" fill="none" stroke="#ff1a1a" stroke-width="1.1" /><polyline points="196.0,584.0 206.6,592.9 217.1,600.9 227.7,608.0 238.3,614.3 248.8,619.8 259.4,624.3 270.0,628.1 280.5,630.9 291.1,632.9 301.7,634.1 312.2,634.4 322.8,633.8" fill="none" stroke="#ff1a1a" stroke-width="1.1" /><polyline points="129.0,455.0 194.0,605.0" fill="none" stroke="#ff1a1a" stroke-width="0.9" /><polyline points="159.0,462.0 226.0,630.0" fill="none" stroke="#ff1a1a" stroke-width="0.9" /><polyline points="201.5,466.0 266.0,630.0" fill="none" stroke="#ff1a1a" stroke-width="0.9" /><polyline points="234.0,470.0 284.0,620.0" fill="none" stroke="#ff1a1a" stroke-width="0.9" /><polyline points="294.0,543.0 335.0,540.0 384.0,536.0 437.0,524.0 474.0,510.0" fill="none" stroke="#8c0c0c" stroke-width="1" /><polyline points="300.0,575.0 343.0,574.0 392.0,567.0 443.0,548.0 493.0,520.0" fill="none" stroke="#8c0c0c" stroke-width="1" /><polyline points="306.0,604.5 355.0,603.5 400.0,596.0 449.0,578.0 498.0,544.0" fill="none" stroke="#8c0c0c" stroke-width="1" /><polyline points="324.5,634.0 365.0,633.0 406.0,626.0 453.0,608.0 494.0,587.0 524.0,560.0 539.0,520.0" fill="none" stroke="#8c0c0c" stroke-width="1" /><polyline points="330.7,662.6 375.5,660.5 416.0,652.4 467.0,632.0 498.0,610.0 524.0,580.0 539.0,550.0 544.0,520.0" fill="none" stroke="#8c0c0c" stroke-width="1" /><polyline points="377.5,689.0 420.0,679.0 471.0,660.0 506.0,635.0 534.0,600.0 550.0,560.0 552.0,520.0" fill="none" stroke="#8c0c0c" stroke-width="1" /><polyline points="349.0,715.5 383.6,714.5 426.4,706.4 471.0,687.0 506.0,660.5 534.0,630.0 557.0,581.0 561.0,550.0 559.0,520.0" fill="none" stroke="#8c0c0c" stroke-width="1" /><polyline points="335.0,480.0 335.0,540.0 359.0,634.0 366.0,662.0" fill="none" stroke="#8c0c0c" stroke-width="0.9" /><polyline points="366.0,472.0 384.0,536.0 406.0,626.0 414.0,660.0 424.0,706.0" fill="none" stroke="#8c0c0c" stroke-width="0.9" /><polyline points="414.0,480.0 437.0,524.0 453.0,608.0 467.0,632.0 471.0,687.0" fill="none" stroke="#8c0c0c" stroke-width="0.9" /><polyline points="464.0,500.0 484.0,560.0 494.0,587.0 506.0,635.0 506.0,660.0" fill="none" stroke="#8c0c0c" stroke-width="0.9" /><polyline points="509.0,520.0 524.0,560.0 534.0,600.0 534.0,630.0" fill="none" stroke="#8c0c0c" stroke-width="0.9" /><polyline points="300.0,575.0 306.0,604.5" fill="none" stroke="#8c0c0c" stroke-width="0.9" /><polyline points="324.5,634.0 330.7,662.6 349.0,715.5" fill="none" stroke="#8c0c0c" stroke-width="0.9" /><polyline points="365.9,471.0 434.4,515.6 491.8,545.0" fill="none" stroke="#8c0c0c" stroke-width="1" /><polyline points="617.7,384.0 621.4,406.0 625.0,454.4" fill="none" stroke="#8c0c0c" stroke-width="1" /><polyline points="617.7,384.0 510.3,497.0" fill="none" stroke="#8c0c0c" stroke-width="1" /><polyline points="621.4,406.0 554.0,470.0 534.0,492.0" fill="none" stroke="#8c0c0c" stroke-width="1" /><polyline points="625.0,454.4 558.4,511.9" fill="none" stroke="#8c0c0c" stroke-width="1" /><polyline points="484.0,444.0 519.6,417.4 546.0,440.5 549.0,466.5" fill="none" stroke="#8c0c0c" stroke-width="1" /><polyline points="484.0,444.0 507.5,471.0 549.0,466.5" fill="none" stroke="#8c0c0c" stroke-width="1" /><polyline points="519.6,417.4 524.0,440.0" fill="none" stroke="#8c0c0c" stroke-width="1" /><polyline points="484.0,444.0 494.0,475.0 509.0,510.0" fill="none" stroke="#8c0c0c" stroke-width="1" /><polyline points="544.0,360.0 545.0,400.0 594.0,410.0 619.0,420.0" fill="none" stroke="#8c0c0c" stroke-width="1" /><polyline points="524.0,238.0 544.0,360.0" fill="none" stroke="#8c0c0c" stroke-width="1" /><polyline points="504.0,380.0 554.0,390.0 617.7,384.0" fill="none" stroke="#8c0c0c" stroke-width="1" /><polyline points="206.6,729.0 323.0,638.0" fill="none" stroke="#ff1a1a" stroke-width="1.2" /><polyline points="230.5,784.6 278.0,742.0 323.0,710.0" fill="none" stroke="#8c0c0c" stroke-width="1" /><polyline points="242.0,811.0 348.6,716.0" fill="none" stroke="#8c0c0c" stroke-width="1.2" /><polyline points="269.8,786.0 330.0,700.0" fill="none" stroke="#8c0c0c" stroke-width="0.9" /><polyline points="265.0,719.0 284.0,700.0 324.0,670.0" fill="none" stroke="#8c0c0c" stroke-width="0.9" /><text x="574" y="427" font-family="Liberation Sans" font-weight="bold" font-size="12" fill="#5a1050" opacity="0.8">метров</text></g></svg><div class="a" style="left:2px;top:963px;width:1549px;height:95px;background:#fff;border-left:2px solid #a0a0a0;border-top:2px solid #a8a8a8"></div><div class="a" style="left:108.0px;top:984px;width:2px;height:57px;background:#4a4a4a"></div><div class="t" style="left:73.0px;top:972px;width:80px;text-align:center;font-size:11.5px;letter-spacing:-0.3px">7:00</div><div class="a" style="left:237.0px;top:984px;width:2px;height:68px;background:#4a4a4a"></div><div class="t" style="left:202.0px;top:972px;width:80px;text-align:center;font-size:11.5px;letter-spacing:-0.3px">8:00</div><div class="a" style="left:366.0px;top:984px;width:2px;height:68px;background:#4a4a4a"></div><div class="t" style="left:331.0px;top:972px;width:80px;text-align:center;font-size:11.5px;letter-spacing:-0.3px">9:00</div><div class="a" style="left:494.5px;top:984px;width:2px;height:68px;background:#4a4a4a"></div><div class="t" style="left:459.5px;top:972px;width:80px;text-align:center;font-size:11.5px;letter-spacing:-0.3px">10:00</div><div class="a" style="left:623.0px;top:984px;width:2px;height:68px;background:#4a4a4a"></div><div class="t" style="left:588.0px;top:972px;width:80px;text-align:center;font-size:11.5px;letter-spacing:-0.3px">11:00</div><div class="a" style="left:751.5px;top:984px;width:2px;height:68px;background:#4a4a4a"></div><div class="t" style="left:716.5px;top:972px;width:80px;text-align:center;font-size:11.5px;letter-spacing:-0.3px">12:00</div><div class="a" style="left:880.0px;top:984px;width:2px;height:68px;background:#4a4a4a"></div><div class="t" style="left:845.0px;top:972px;width:80px;text-align:center;font-size:11.5px;letter-spacing:-0.3px">13:00</div><div class="a" style="left:1009.0px;top:984px;width:2px;height:68px;background:#4a4a4a"></div><div class="t" style="left:974.0px;top:972px;width:80px;text-align:center;font-size:11.5px;letter-spacing:-0.3px">14:00</div><div class="a" style="left:1138.0px;top:984px;width:2px;height:68px;background:#4a4a4a"></div><div class="t" style="left:1103.0px;top:972px;width:80px;text-align:center;font-size:11.5px;letter-spacing:-0.3px">15:00</div><div class="a" style="left:1267.0px;top:984px;width:2px;height:68px;background:#4a4a4a"></div><div class="t" style="left:1232.0px;top:972px;width:80px;text-align:center;font-size:11.5px;letter-spacing:-0.3px">16:00</div><div class="a" style="left:1396.0px;top:984px;width:2px;height:68px;background:#4a4a4a"></div><div class="t" style="left:1361.0px;top:972px;width:80px;text-align:center;font-size:11.5px;letter-spacing:-0.3px">17:00</div><div class="a" style="left:1524.5px;top:984px;width:2px;height:68px;background:#4a4a4a"></div><div class="t" style="left:1489.5px;top:972px;width:80px;text-align:center;font-size:11.5px;letter-spacing:-0.3px">18:00</div><div class="a" style="left:97.0px;top:985px;width:1.2px;height:56px;background:#ff0000"></div><div class="t" style="left:61.5px;top:1043px;width:80px;text-align:center;font-size:11.5px;letter-spacing:-0.3px;color:#ff0000">06:55</div><div class="a" style="left:545.5px;top:985px;width:1.2px;height:56px;background:#ff00ff"></div><div class="t" style="left:509.5px;top:1043px;width:80px;text-align:center;font-size:11.5px;letter-spacing:-0.3px;color:#ff00ff">10:24</div><div class="a" style="left:1430.9px;top:985px;width:1.2px;height:56px;background:#ff0000"></div><div class="t" style="left:1395.0px;top:1043px;width:80px;text-align:center;font-size:11.5px;letter-spacing:-0.3px;color:#ff0000">17:16</div><div class="a" style="left:1558px;top:70px;width:362px;height:987px;background:#dde4ee"></div><div class="a" style="left:1558px;top:70px;width:362px;height:1px;background:#a0a0a0"></div><div class="a" style="left:1558px;top:71px;width:362px;height:1px;background:#fff"></div><div class="a" style="left:1560px;top:77px;width:94px;height:18px;background:linear-gradient(#f3f5f8,#d9e0ea);border-right:2px solid #8c8c8c;border-top:1px solid #fff"></div><div class="t" style="left:1560px;top:78px;width:94px;text-align:center;font-size:11.6px">Информация</div><div class="a" style="left:1654px;top:77px;width:98px;height:18px;background:linear-gradient(#f3f5f8,#d9e0ea);border-right:2px solid #8c8c8c;border-top:1px solid #fff"></div><div class="t" style="left:1654px;top:78px;width:98px;text-align:center;font-size:11.6px">Оптимизация</div><div class="a" style="left:1752px;top:77px;width:83px;height:18px;background:linear-gradient(#f3f5f8,#d9e0ea);border-right:2px solid #8c8c8c;border-top:1px solid #fff"></div><div class="t" style="left:1752px;top:78px;width:83px;text-align:center;font-size:11.6px">Настройки</div><div class="a" style="left:1836px;top:77px;width:104px;height:18px;background:linear-gradient(#f3f5f8,#d9e0ea);border-right:2px solid #8c8c8c;border-top:1px solid #fff"></div><div class="t" style="left:1836px;top:78px;width:104px;text-align:center;font-size:11.6px">Диаграммы КЕО</div><div class="a" style="left:1560px;top:95px;width:123px;height:19px;background:linear-gradient(#f3f5f8,#d9e0ea);border-right:2px solid #8c8c8c;border-top:1px solid #fff"></div><div class="t" style="left:1560px;top:98px;width:123px;text-align:center;font-size:11.6px">Параметры</div><div class="a" style="left:1683px;top:95px;width:171px;height:19px;background:linear-gradient(#f3f5f8,#d9e0ea);border-right:2px solid #8c8c8c;border-top:1px solid #fff"></div><div class="t" style="left:1683px;top:98px;width:171px;text-align:center;font-size:11.6px">Расчетные объекты</div><div class="a" style="left:1854px;top:93px;width:86px;height:21px;background:linear-gradient(#fbfcfd,#e6ebf2);border-right:2px solid #8c8c8c;border-top:1px solid #fff"></div><div class="t" style="left:1854px;top:98px;width:86px;text-align:center;font-size:11.6px">Отчет</div><div class="a" style="left:1558px;top:114px;width:362px;height:1px;background:#eef2f7"></div><div class="a" style="left:1561px;top:118px;width:60px;height:22px;background:#dde4ee;border:1px solid #8a8a8a;border-right-color:#fff;border-bottom-color:#fff"></div><div class="a" style="left:1625px;top:118px;width:90px;height:22px;background:linear-gradient(#f5f7fa,#dde4ee);border:1px solid #fff;border-right-color:#7a7a7a;border-bottom-color:#7a7a7a"></div><div class="a" style="left:1720px;top:118px;width:56px;height:22px;background:linear-gradient(#f5f7fa,#dde4ee);border:1px solid #fff;border-right-color:#7a7a7a;border-bottom-color:#7a7a7a"></div><div class="a" style="left:1780px;top:118px;width:57px;height:22px;background:linear-gradient(#f5f7fa,#dde4ee);border:1px solid #fff;border-right-color:#7a7a7a;border-bottom-color:#7a7a7a"></div><div class="t" style="left:1590px;top:122px;font-size:11.6px">Окна</div><div class="t" style="left:1655px;top:122px;font-size:11.6px">Площадки</div><div class="t" style="left:1748px;top:122px;font-size:11.6px">КЕО</div><div class="t" style="left:1810px;top:122px;font-size:11.6px">Шум</div><div class="a" style="left:1573px;top:121px;width:11px;height:16px;background:#cfe8fb;border:2px solid #1787ff"><div style="position:absolute;left:3px;top:1px;width:1px;height:12px;background:#1787ff"></div></div><div class="a" style="left:1567px;top:120px;width:6px;height:6px;background:#f0e040"></div><div class="a" style="left:1633px;top:130px;width:16px;height:7px;background:#00dd00"></div><svg style="left:1634px;top:120px" width="14" height="9"><path d="M1 1 L7 6 L13 1 M7 6 L7 9 M3 8 L11 8" stroke="#d8c020" stroke-width="2" fill="none"/></svg><div class="a" style="left:1730px;top:121px;width:9px;height:15px;background:#cfe8fb;border:2px solid #1787ff"><div style="position:absolute;left:2px;top:1px;width:1px;height:11px;background:#1787ff"></div></div><div class="a" style="left:1726px;top:134px;width:3px;height:3px;background:#e00"></div><svg style="left:1787px;top:120px" width="18" height="17"><path d="M2 6 L6 6 L11 1 L11 15 L6 10 L2 10 Z" fill="#2b8ff0" stroke="#1060c0" stroke-width="0.8"/><path d="M13 4 L16 2 M14 8 L17 8 M13 12 L16 14" stroke="#22cc22" stroke-width="1.5"/><circle cx="3" cy="14" r="2" fill="#1060c0"/></svg><div class="a" style="left:1564px;top:147px;width:356px;height:701px;background:#fff;border-left:1px solid #6a6a6a;border-top:1px solid #6a6a6a"></div><div class="a" style="left:1565px;top:148px;width:349px;height:22px;background:#dde4ee;border-bottom:2px solid #2a2a2a"></div><div class="a" style="left:1627px;top:148px;width:2px;height:22px;background:#2a2a2a"></div><div class="a" style="left:1659px;top:148px;width:2px;height:22px;background:#2a2a2a"></div><div class="a" style="left:1723px;top:148px;width:2px;height:22px;background:#2a2a2a"></div><div class="a" style="left:1787px;top:148px;width:2px;height:22px;background:#2a2a2a"></div><div class="a" style="left:1850px;top:148px;width:2px;height:22px;background:#2a2a2a"></div><div class="a" style="left:1913px;top:148px;width:2px;height:22px;background:#2a2a2a"></div><div class="t" style="left:1568px;top:152px;font-size:11.6px">Наимен.</div><div class="t" style="left:1631px;top:152px;font-size:11.6px">Инд.</div><div class="t" style="left:1663px;top:152px;font-size:11.6px">Непр.</div><div class="t" style="left:1727px;top:152px;font-size:11.6px">%</div><div class="t" style="left:1791px;top:152px;font-size:11.6px">Сумм.</div><div class="t" style="left:1854px;top:152px;font-size:11.6px">%</div><div class="a" style="left:1565px;top:171px;width:349px;height:17px;background:#f0f0f0"></div><div class="t" style="left:1569px;top:174px;font-size:11.6px;color:#000080">Дом2, Группа этажей 9-14</div><div class="a" style="left:1565px;top:187px;width:349px;height:1px;background:#d0d0d0"></div><div class="a" style="left:1565px;top:203px;width:349px;height:1px;background:#d0d0d0"></div><div class="a" style="left:1565px;top:220px;width:349px;height:1px;background:#d0d0d0"></div><div class="a" style="left:1565px;top:236px;width:349px;height:1px;background:#d0d0d0"></div><div class="a" style="left:1565px;top:253px;width:349px;height:1px;background:#d0d0d0"></div><div class="a" style="left:1565px;top:269px;width:349px;height:1px;background:#d0d0d0"></div><div class="a" style="left:1565px;top:286px;width:349px;height:1px;background:#d0d0d0"></div><div class="a" style="left:1565px;top:303px;width:349px;height:1px;background:#d0d0d0"></div><div class="a" style="left:1565px;top:319px;width:349px;height:1px;background:#d0d0d0"></div><div class="a" style="left:1565px;top:336px;width:349px;height:1px;background:#d0d0d0"></div><div class="a" style="left:1565px;top:352px;width:349px;height:1px;background:#d0d0d0"></div><div class="a" style="left:1565px;top:369px;width:349px;height:1px;background:#d0d0d0"></div><div class="a" style="left:1565px;top:386px;width:349px;height:1px;background:#d0d0d0"></div><div class="a" style="left:1565px;top:402px;width:349px;height:1px;background:#d0d0d0"></div><div class="a" style="left:1565px;top:419px;width:349px;height:1px;background:#d0d0d0"></div><div class="a" style="left:1565px;top:435px;width:349px;height:1px;background:#d0d0d0"></div><div class="a" style="left:1565px;top:452px;width:349px;height:1px;background:#d0d0d0"></div><div class="a" style="left:1565px;top:468px;width:349px;height:1px;background:#d0d0d0"></div><div class="a" style="left:1565px;top:485px;width:349px;height:1px;background:#d0d0d0"></div><div class="a" style="left:1565px;top:502px;width:349px;height:1px;background:#d0d0d0"></div><div class="a" style="left:1565px;top:518px;width:349px;height:1px;background:#d0d0d0"></div><div class="a" style="left:1565px;top:535px;width:349px;height:1px;background:#d0d0d0"></div><div class="a" style="left:1565px;top:551px;width:349px;height:1px;background:#d0d0d0"></div><div class="a" style="left:1627px;top:187px;width:1px;height:365px;background:#d0d0d0"></div><div class="a" style="left:1659px;top:187px;width:1px;height:365px;background:#d0d0d0"></div><div class="a" style="left:1723px;top:171px;width:1px;height:381px;background:#d0d0d0"></div><div class="a" style="left:1787px;top:171px;width:1px;height:381px;background:#d0d0d0"></div><div class="a" style="left:1850px;top:171px;width:1px;height:381px;background:#d0d0d0"></div><div class="a" style="left:1913px;top:171px;width:1px;height:381px;background:#d0d0d0"></div><div class="t" style="left:1567px;top:190.1px;width:61px;overflow:hidden;font-size:11.6px">#23</div><div class="t" style="left:1630px;top:190.1px;width:30px;overflow:hidden;font-size:11.6px">1</div><div class="t" style="left:1662px;top:190.1px;width:62px;overflow:hidden;font-size:11.6px">2 ч 27 мин</div><div class="t" style="left:1726px;top:190.1px;width:62px;overflow:hidden;font-size:11.6px">122,50 %</div><div class="t" style="left:1790px;top:190.1px;width:62px;overflow:hidden;font-size:11.6px">2 ч 27 мин</div><div class="t" style="left:1853px;top:190.1px;width:61px;overflow:hidden;font-size:11.6px">98,00 %</div><div class="t" style="left:1567px;top:206.7px;width:61px;overflow:hidden;font-size:11.6px">#24</div><div class="t" style="left:1630px;top:206.7px;width:30px;overflow:hidden;font-size:11.6px">1</div><div class="t" style="left:1662px;top:206.7px;width:62px;overflow:hidden;font-size:11.6px">3 ч</div><div class="t" style="left:1726px;top:206.7px;width:62px;overflow:hidden;font-size:11.6px">150,00 %</div><div class="t" style="left:1790px;top:206.7px;width:62px;overflow:hidden;font-size:11.6px">3 ч</div><div class="t" style="left:1853px;top:206.7px;width:61px;overflow:hidden;font-size:11.6px">120,00 %</div><div class="t" style="left:1567px;top:223.2px;width:61px;overflow:hidden;font-size:11.6px">#25</div><div class="t" style="left:1630px;top:223.2px;width:30px;overflow:hidden;font-size:11.6px">1</div><div class="t" style="left:1662px;top:223.2px;width:62px;overflow:hidden;font-size:11.6px">3 ч 27 мин</div><div class="t" style="left:1726px;top:223.2px;width:62px;overflow:hidden;font-size:11.6px">172,50 %</div><div class="t" style="left:1790px;top:223.2px;width:62px;overflow:hidden;font-size:11.6px">3 ч 27 мин</div><div class="t" style="left:1853px;top:223.2px;width:61px;overflow:hidden;font-size:11.6px">138,00 %</div><div class="t" style="left:1567px;top:239.8px;width:61px;overflow:hidden;font-size:11.6px">#26</div><div class="t" style="left:1630px;top:239.8px;width:30px;overflow:hidden;font-size:11.6px">1</div><div class="t" style="left:1662px;top:239.8px;width:62px;overflow:hidden;font-size:11.6px">2 ч 56 мин</div><div class="t" style="left:1726px;top:239.8px;width:62px;overflow:hidden;font-size:11.6px">146,67 %</div><div class="t" style="left:1790px;top:239.8px;width:62px;overflow:hidden;font-size:11.6px">2 ч 56 мин</div><div class="t" style="left:1853px;top:239.8px;width:61px;overflow:hidden;font-size:11.6px">117,33 %</div><div class="t" style="left:1567px;top:256.4px;width:61px;overflow:hidden;font-size:11.6px">#27</div><div class="t" style="left:1630px;top:256.4px;width:30px;overflow:hidden;font-size:11.6px">1</div><div class="t" style="left:1662px;top:256.4px;width:62px;overflow:hidden;font-size:11.6px">2 ч 41 мин</div><div class="t" style="left:1726px;top:256.4px;width:62px;overflow:hidden;font-size:11.6px">134,17 %</div><div class="t" style="left:1790px;top:256.4px;width:62px;overflow:hidden;font-size:11.6px">2 ч 41 мин</div><div class="t" style="left:1853px;top:256.4px;width:61px;overflow:hidden;font-size:11.6px">107,33 %</div><div class="t" style="left:1567px;top:273.0px;width:61px;overflow:hidden;font-size:11.6px">#28</div><div class="t" style="left:1630px;top:273.0px;width:30px;overflow:hidden;font-size:11.6px">1</div><div class="t" style="left:1662px;top:273.0px;width:62px;overflow:hidden;font-size:11.6px">3 ч 55 мин</div><div class="t" style="left:1726px;top:273.0px;width:62px;overflow:hidden;font-size:11.6px">195,83 %</div><div class="t" style="left:1790px;top:273.0px;width:62px;overflow:hidden;font-size:11.6px">3 ч 55 мин</div><div class="t" style="left:1853px;top:273.0px;width:61px;overflow:hidden;font-size:11.6px">156,67 %</div><div class="t" style="left:1567px;top:289.6px;width:61px;overflow:hidden;font-size:11.6px">#29</div><div class="t" style="left:1630px;top:289.6px;width:30px;overflow:hidden;font-size:11.6px">1</div><div class="t" style="left:1662px;top:289.6px;width:62px;overflow:hidden;font-size:11.6px">4 ч 29 мин</div><div class="t" style="left:1726px;top:289.6px;width:62px;overflow:hidden;font-size:11.6px">224,17 %</div><div class="t" style="left:1790px;top:289.6px;width:62px;overflow:hidden;font-size:11.6px">4 ч 29 мин</div><div class="t" style="left:1853px;top:289.6px;width:61px;overflow:hidden;font-size:11.6px">179,33 %</div><div class="t" style="left:1567px;top:306.1px;width:61px;overflow:hidden;font-size:11.6px">#30</div><div class="t" style="left:1630px;top:306.1px;width:30px;overflow:hidden;font-size:11.6px">1</div><div class="t" style="left:1662px;top:306.1px;width:62px;overflow:hidden;font-size:11.6px">4 ч 56 мин</div><div class="t" style="left:1726px;top:306.1px;width:62px;overflow:hidden;font-size:11.6px">246,67 %</div><div class="t" style="left:1790px;top:306.1px;width:62px;overflow:hidden;font-size:11.6px">4 ч 56 мин</div><div class="t" style="left:1853px;top:306.1px;width:61px;overflow:hidden;font-size:11.6px">197,33 %</div><div class="t" style="left:1567px;top:322.7px;width:61px;overflow:hidden;font-size:11.6px">#31</div><div class="t" style="left:1630px;top:322.7px;width:30px;overflow:hidden;font-size:11.6px">1</div><div class="t" style="left:1662px;top:322.7px;width:62px;overflow:hidden;font-size:11.6px">4 ч 29 мин</div><div class="t" style="left:1726px;top:322.7px;width:62px;overflow:hidden;font-size:11.6px">224,17 %</div><div class="t" style="left:1790px;top:322.7px;width:62px;overflow:hidden;font-size:11.6px">4 ч 29 мин</div><div class="t" style="left:1853px;top:322.7px;width:61px;overflow:hidden;font-size:11.6px">179,33 %</div><div class="t" style="left:1567px;top:339.3px;width:61px;overflow:hidden;font-size:11.6px">#32</div><div class="t" style="left:1630px;top:339.3px;width:30px;overflow:hidden;font-size:11.6px">1</div><div class="t" style="left:1662px;top:339.3px;width:62px;overflow:hidden;font-size:11.6px">5 ч 20 мин</div><div class="t" style="left:1726px;top:339.3px;width:62px;overflow:hidden;font-size:11.6px">266,67 %</div><div class="t" style="left:1790px;top:339.3px;width:62px;overflow:hidden;font-size:11.6px">5 ч 20 мин</div><div class="t" style="left:1853px;top:339.3px;width:61px;overflow:hidden;font-size:11.6px">213,33 %</div><div class="t" style="left:1567px;top:355.9px;width:61px;overflow:hidden;font-size:11.6px">#33</div><div class="t" style="left:1630px;top:355.9px;width:30px;overflow:hidden;font-size:11.6px">1</div><div class="t" style="left:1662px;top:355.9px;width:62px;overflow:hidden;font-size:11.6px">5 ч 43 мин</div><div class="t" style="left:1726px;top:355.9px;width:62px;overflow:hidden;font-size:11.6px">285,83 %</div><div class="t" style="left:1790px;top:355.9px;width:62px;overflow:hidden;font-size:11.6px">5 ч 43 мин</div><div class="t" style="left:1853px;top:355.9px;width:61px;overflow:hidden;font-size:11.6px">228,67 %</div><div class="t" style="left:1567px;top:372.5px;width:61px;overflow:hidden;font-size:11.6px">#34</div><div class="t" style="left:1630px;top:372.5px;width:30px;overflow:hidden;font-size:11.6px">1</div><div class="t" style="left:1662px;top:372.5px;width:62px;overflow:hidden;font-size:11.6px">10 ч 01 мин</div><div class="t" style="left:1726px;top:372.5px;width:62px;overflow:hidden;font-size:11.6px">500,83 %</div><div class="t" style="left:1790px;top:372.5px;width:62px;overflow:hidden;font-size:11.6px">10 ч 01 мин</div><div class="t" style="left:1853px;top:372.5px;width:61px;overflow:hidden;font-size:11.6px">400,67 %</div><div class="t" style="left:1567px;top:389.0px;width:61px;overflow:hidden;font-size:11.6px">#35</div><div class="t" style="left:1630px;top:389.0px;width:30px;overflow:hidden;font-size:11.6px">1</div><div class="t" style="left:1662px;top:389.0px;width:62px;overflow:hidden;font-size:11.6px">3 ч 35 мин</div><div class="t" style="left:1726px;top:389.0px;width:62px;overflow:hidden;font-size:11.6px">179,17 %</div><div class="t" style="left:1790px;top:389.0px;width:62px;overflow:hidden;font-size:11.6px">3 ч 35 мин</div><div class="t" style="left:1853px;top:389.0px;width:61px;overflow:hidden;font-size:11.6px">143,33 %</div><div class="t" style="left:1567px;top:405.6px;width:61px;overflow:hidden;font-size:11.6px">#36</div><div class="t" style="left:1630px;top:405.6px;width:30px;overflow:hidden;font-size:11.6px">1</div><div class="t" style="left:1662px;top:405.6px;width:62px;overflow:hidden;font-size:11.6px">3 ч 35 мин</div><div class="t" style="left:1726px;top:405.6px;width:62px;overflow:hidden;font-size:11.6px">179,17 %</div><div class="t" style="left:1790px;top:405.6px;width:62px;overflow:hidden;font-size:11.6px">3 ч 35 мин</div><div class="t" style="left:1853px;top:405.6px;width:61px;overflow:hidden;font-size:11.6px">143,33 %</div><div class="t" style="left:1567px;top:422.2px;width:61px;overflow:hidden;font-size:11.6px">#37</div><div class="t" style="left:1630px;top:422.2px;width:30px;overflow:hidden;font-size:11.6px">1</div><div class="t" style="left:1662px;top:422.2px;width:62px;overflow:hidden;font-size:11.6px">9 ч 31 мин</div><div class="t" style="left:1726px;top:422.2px;width:62px;overflow:hidden;font-size:11.6px">475,83 %</div><div class="t" style="left:1790px;top:422.2px;width:62px;overflow:hidden;font-size:11.6px">9 ч 31 мин</div><div class="t" style="left:1853px;top:422.2px;width:61px;overflow:hidden;font-size:11.6px">380,67 %</div><div class="t" style="left:1567px;top:438.8px;width:61px;overflow:hidden;font-size:11.6px">#38</div><div class="t" style="left:1630px;top:438.8px;width:30px;overflow:hidden;font-size:11.6px">1</div><div class="t" style="left:1662px;top:438.8px;width:62px;overflow:hidden;font-size:11.6px">9 ч 01 мин</div><div class="t" style="left:1726px;top:438.8px;width:62px;overflow:hidden;font-size:11.6px">450,83 %</div><div class="t" style="left:1790px;top:438.8px;width:62px;overflow:hidden;font-size:11.6px">9 ч 01 мин</div><div class="t" style="left:1853px;top:438.8px;width:61px;overflow:hidden;font-size:11.6px">360,67 %</div><div class="t" style="left:1567px;top:455.4px;width:61px;overflow:hidden;font-size:11.6px">#39</div><div class="t" style="left:1630px;top:455.4px;width:30px;overflow:hidden;font-size:11.6px">1</div><div class="t" style="left:1662px;top:455.4px;width:62px;overflow:hidden;font-size:11.6px">4 ч 58 мин</div><div class="t" style="left:1726px;top:455.4px;width:62px;overflow:hidden;font-size:11.6px">248,33 %</div><div class="t" style="left:1790px;top:455.4px;width:62px;overflow:hidden;font-size:11.6px">4 ч 58 мин</div><div class="t" style="left:1853px;top:455.4px;width:61px;overflow:hidden;font-size:11.6px">198,67 %</div><div class="t" style="left:1567px;top:471.9px;width:61px;overflow:hidden;font-size:11.6px">#40</div><div class="t" style="left:1630px;top:471.9px;width:30px;overflow:hidden;font-size:11.6px">1</div><div class="t" style="left:1662px;top:471.9px;width:62px;overflow:hidden;font-size:11.6px">8 ч 30 мин</div><div class="t" style="left:1726px;top:471.9px;width:62px;overflow:hidden;font-size:11.6px">425,00 %</div><div class="t" style="left:1790px;top:471.9px;width:62px;overflow:hidden;font-size:11.6px">8 ч 30 мин</div><div class="t" style="left:1853px;top:471.9px;width:61px;overflow:hidden;font-size:11.6px">340,00 %</div><div class="t" style="left:1567px;top:488.5px;width:61px;overflow:hidden;font-size:11.6px">#41</div><div class="t" style="left:1630px;top:488.5px;width:30px;overflow:hidden;font-size:11.6px">1</div><div class="t" style="left:1662px;top:488.5px;width:62px;overflow:hidden;font-size:11.6px">6 ч 34 мин</div><div class="t" style="left:1726px;top:488.5px;width:62px;overflow:hidden;font-size:11.6px">328,33 %</div><div class="t" style="left:1790px;top:488.5px;width:62px;overflow:hidden;font-size:11.6px">6 ч 34 мин</div><div class="t" style="left:1853px;top:488.5px;width:61px;overflow:hidden;font-size:11.6px">262,67 %</div><div class="t" style="left:1567px;top:505.1px;width:61px;overflow:hidden;font-size:11.6px">#42</div><div class="t" style="left:1630px;top:505.1px;width:30px;overflow:hidden;font-size:11.6px">1</div><div class="t" style="left:1662px;top:505.1px;width:62px;overflow:hidden;font-size:11.6px">6 ч 32 мин</div><div class="t" style="left:1726px;top:505.1px;width:62px;overflow:hidden;font-size:11.6px">326,67 %</div><div class="t" style="left:1790px;top:505.1px;width:62px;overflow:hidden;font-size:11.6px">6 ч 32 мин</div><div class="t" style="left:1853px;top:505.1px;width:61px;overflow:hidden;font-size:11.6px">261,33 %</div><div class="t" style="left:1567px;top:521.7px;width:61px;overflow:hidden;font-size:11.6px">#43</div><div class="t" style="left:1630px;top:521.7px;width:30px;overflow:hidden;font-size:11.6px">1</div><div class="t" style="left:1662px;top:521.7px;width:62px;overflow:hidden;font-size:11.6px">6 ч 15 мин</div><div class="t" style="left:1726px;top:521.7px;width:62px;overflow:hidden;font-size:11.6px">312,50 %</div><div class="t" style="left:1790px;top:521.7px;width:62px;overflow:hidden;font-size:11.6px">6 ч 15 мин</div><div class="t" style="left:1853px;top:521.7px;width:61px;overflow:hidden;font-size:11.6px">250,00 %</div><div class="t" style="left:1567px;top:538.3px;width:61px;overflow:hidden;font-size:11.6px">#44</div><div class="t" style="left:1630px;top:538.3px;width:30px;overflow:hidden;font-size:11.6px">1</div><div class="t" style="left:1662px;top:538.3px;width:62px;overflow:hidden;font-size:11.6px">7 ч 03 мин</div><div class="t" style="left:1726px;top:538.3px;width:62px;overflow:hidden;font-size:11.6px">352,50 %</div><div class="t" style="left:1790px;top:538.3px;width:62px;overflow:hidden;font-size:11.6px">7 ч 03 мин</div><div class="t" style="left:1853px;top:538.3px;width:61px;overflow:hidden;font-size:11.6px">282,00 %</div><div class="a" style="left:1564px;top:847px;width:356px;height:6px;background:#e6ebf2"></div><div class="a" style="left:1564px;top:853px;width:356px;height:1px;background:#8a8a8a"></div><div class="a" style="left:1564px;top:854px;width:356px;height:202px;background:#fff;border-left:1px solid #6a6a6a"></div><div class="a" style="left:1565px;top:855px;width:355px;height:21px;background:#dde4ee;border-bottom:2px solid #2a2a2a"></div><div class="a" style="left:1633px;top:855px;width:2px;height:21px;background:#2a2a2a"></div><div class="a" style="left:1701px;top:855px;width:2px;height:21px;background:#2a2a2a"></div><div class="a" style="left:1770px;top:855px;width:2px;height:21px;background:#2a2a2a"></div><div class="a" style="left:1838px;top:855px;width:2px;height:21px;background:#2a2a2a"></div><div class="a" style="left:1907px;top:855px;width:2px;height:21px;background:#2a2a2a"></div><div class="t" style="left:1568px;top:859px;font-size:11.6px">Начало</div><div class="t" style="left:1637px;top:859px;font-size:11.6px">Конец</div><div class="t" style="left:1705px;top:859px;font-size:11.6px">Продолж.</div><div class="a" style="left:1565px;top:876px;width:355px;height:16px;background:#0078d7"></div><div class="a" style="left:1634px;top:876px;width:1px;height:16px;background:#a8c8e8"></div><div class="a" style="left:1702px;top:876px;width:1px;height:16px;background:#a8c8e8"></div><div class="a" style="left:1771px;top:876px;width:1px;height:16px;background:#a8c8e8"></div><div class="a" style="left:1839px;top:876px;width:1px;height:16px;background:#a8c8e8"></div><div class="a" style="left:1908px;top:876px;width:1px;height:16px;background:#a8c8e8"></div><div class="a" style="left:1565px;top:1031px;width:355px;height:16px;background:#f0f0f0"></div><div class="a" style="left:1583px;top:1032px;width:18px;height:14px;background:#cdcdcd"></div><svg style="left:1570px;top:1034px" width="8" height="10"><path d="M6 1 L2 5 L6 9" stroke="#444" stroke-width="1.6" fill="none"/></svg><div class="a" style="left:1564px;top:1055px;width:356px;height:1px;background:#a0a0a0"></div><div class="a" style="left:1551px;top:74px;width:1px;height:984px;background:#a0a0a0"></div><div class="a" style="left:1552px;top:74px;width:3px;height:984px;background:linear-gradient(90deg,#c8d0dc,#eef2f7)"></div><div class="a" style="left:1555px;top:74px;width:1px;height:984px;background:#fff"></div><div class="a" style="left:1563px;top:147px;width:1px;height:909px;background:#808080"></div><div class="a" style="left:645px;top:48px;width:913px;height:864px;background:#dde4ee;border:1px solid #2f7fd6;box-shadow:0 0 6px rgba(0,0,0,0.25)"></div><div class="a" style="left:646px;top:49px;width:911px;height:31px;background:#fff"></div><svg style="left:652px;top:56px" width="18" height="18" viewBox="0 0 18 18"><rect x="3" y="1" width="4" height="13" fill="#c8c8a0" stroke="#666" stroke-width="0.6"/><rect x="7" y="3" width="4" height="11" fill="#e0e090" stroke="#666" stroke-width="0.6"/><rect x="11" y="2" width="4" height="12" fill="#c8c8a0" stroke="#666" stroke-width="0.6"/><path d="M1 11 L6 17 L4 17 Z" fill="#222"/><rect x="1" y="10" width="4" height="3" fill="#ff0"/></svg><div class="t" style="left:676px;top:58px;font-size:12.6px;color:#000">СИТИС: Солярис - Библиотека объектов 5.31 - C:\Users\kiryan_ev\Documents\Якутск.hlt</div><div class="a" style="left:1434px;top:63px;width:11px;height:1px;background:#222"></div><div class="a" style="left:1481px;top:58px;width:11px;height:11px;border:1px solid #222"></div><svg style="left:1529px;top:58px" width="11" height="11"><path d="M0.5 0.5 L10.5 10.5 M10.5 0.5 L0.5 10.5" stroke="#222" stroke-width="1.1"/></svg><div class="a" style="left:646px;top:79px;width:911px;height:22px;background:#f0f0f0"></div><div class="t" style="left:652px;top:83px;font-size:12.5px">Файл</div><div class="t" style="left:696px;top:83px;font-size:12.5px">Правка</div><div class="t" style="left:752px;top:83px;font-size:12.5px">БД</div><div class="t" style="left:783px;top:83px;font-size:12.5px">Справка</div><div class="a" style="left:646px;top:101px;width:911px;height:1px;background:#a8a8a8"></div><div class="a" style="left:646px;top:102px;width:911px;height:1px;background:#fff"></div><div class="a" style="left:646px;top:103px;width:911px;height:23px;background:#dde4ee"></div><div class="a" style="left:647px;top:127px;width:26px;height:760px;background:#dde4ee"></div><div class="a" style="left:673px;top:127px;width:1px;height:731px;background:#a0a0a0"></div><div class="a" style="left:674px;top:127px;width:509px;height:18px;background:#f0f0f0;border-bottom:1px solid #c8c8c8"></div><div class="t" style="left:676px;top:129px;font-size:12px;letter-spacing:-0.2px">Дом1, Группа этажей 9-14</div><div class="a" style="left:674px;top:145px;width:509px;height:713px;background:#d0d0d0"></div><svg style="left:674px;top:145px" width="509" height="713" viewBox="0 0 509 713"><defs><clipPath id="pc"><rect width="509" height="713"/></clipPath></defs><g clip-path="url(#pc)"><polygon points="267.5,-1.0 284.0,-1.0 351.0,73.0 398.0,146.0 436.0,223.0 470.0,331.0 480.0,440.0 482.0,523.0 471.0,603.0 461.0,627.0 443.0,697.0 434.0,717.0 224.0,717.0 224.0,382.0 121.0,382.0" fill="#b3a468"/><polygon points="274.0,6.0 345.0,79.0 392.0,152.0 428.0,227.0 460.0,333.0 471.0,440.0 473.0,523.0 463.0,603.0 453.0,627.0 435.0,697.0 426.0,717.0 224.0,717.0 224.0,382.0 129.0,382.0" fill="#ee8a1b"/><polygon points="195.3,215.7 341.0,268.3 339.0,717.0 224.0,717.0 224.0,382.0 129.0,382.0" fill="#d8923a"/><rect x="-1" y="382" width="225" height="335" fill="#b3a66a"/><path d="M102.60000000000002 0 V713 M454 0 V713 M0 124 H509 M0 476 H509" stroke="#6c6c6c" stroke-width="1" opacity="0.9"/><polyline points="284.0,-1.0 351.0,73.0 398.0,146.0 436.0,223.0 470.0,331.0 480.0,440.0 482.0,523.0 471.0,603.0 461.0,627.0 443.0,697.0 434.0,717.0" fill="none" stroke="#ff2a00" stroke-width="1"/><polyline points="285.2,-1.0 352.2,73.0 399.2,146.0 437.2,223.0 471.2,331.0 481.2,440.0 483.2,523.0 472.2,603.0 462.2,627.0 444.2,697.0 435.2,717.0" fill="none" stroke="#20e0e0" stroke-width="0.8" stroke-dasharray="30 14"/><polyline points="274.0,6.0 345.0,79.0 392.0,152.0 428.0,227.0 460.0,333.0 471.0,440.0 473.0,523.0 463.0,603.0 453.0,627.0 435.0,697.0 426.0,717.0 224.0,717.0" fill="none" stroke="#ff2a00" stroke-width="1"/><polyline points="121.0,382.0 267.5,-1.0" fill="none" stroke="#ff2a00" stroke-width="1.2"/><polyline points="132.0,382.0 274.0,6.0" fill="none" stroke="#ff2a00" stroke-width="0.8" stroke-dasharray="2 1"/><polyline points="-1.0,382.0 129.0,382.0" fill="none" stroke="#ff2a00" stroke-width="1.2"/><polyline points="224.0,382.0 224.0,683.0" fill="none" stroke="#ff2a00" stroke-width="1.2"/><polyline points="195.3,215.7 341.0,268.3 419.0,225.0" fill="none" stroke="#ff2a00" stroke-width="1"/><polyline points="341.0,274.0 422.0,230.0" fill="none" stroke="#ff2a00" stroke-width="1"/><polyline points="341.0,268.0 339.0,717.0" fill="none" stroke="#ff2a00" stroke-width="1"/><polyline points="339.0,391.3 463.0,391.3" fill="none" stroke="#ff2a00" stroke-width="1"/><polyline points="339.0,398.3 463.0,398.3" fill="none" stroke="#ff2a00" stroke-width="1"/><polyline points="338.0,602.4 462.0,602.4" fill="none" stroke="#ff2a00" stroke-width="1"/><polyline points="338.0,611.0 456.0,611.0" fill="none" stroke="#ff2a00" stroke-width="1"/><polyline points="336.0,679.0 433.0,679.0" fill="none" stroke="#ff2a00" stroke-width="1"/><polyline points="224.0,684.0 439.0,684.0" fill="none" stroke="#ff2a00" stroke-width="1"/><polyline points="224.0,690.0 439.0,690.0" fill="none" stroke="#ff2a00" stroke-width="1"/><polyline points="326.0,696.4 431.0,696.4" fill="none" stroke="#ff2a00" stroke-width="1"/><rect x="224" y="685" width="215" height="4" fill="#b3a468"/><polygon points="341.0,270.0 419.0,226.0 421.0,231.0 341.0,275.0" fill="#b3a468"/><rect x="271.5" y="3.5" width="5" height="5" fill="#ff0000"/><rect x="339.5" y="79.5" width="5" height="5" fill="#ff0000"/><rect x="346.5" y="72.5" width="5" height="5" fill="#ff0000"/><rect x="386.5" y="148.5" width="5" height="5" fill="#ff0000"/><rect x="393.5" y="145.5" width="5" height="5" fill="#ff0000"/><rect x="415.5" y="224.5" width="5" height="5" fill="#ff0000"/><rect x="430.5" y="222.5" width="5" height="5" fill="#ff0000"/><rect x="463.5" y="329.5" width="5" height="5" fill="#ff0000"/><rect x="457.5" y="330.5" width="5" height="5" fill="#ff0000"/><rect x="192.5" y="213.5" width="5" height="5" fill="#ff0000"/><rect x="338.5" y="265.5" width="5" height="5" fill="#ff0000"/><rect x="338.5" y="270.5" width="5" height="5" fill="#ff0000"/><rect x="336.5" y="388.5" width="5" height="5" fill="#ff0000"/><rect x="460.5" y="388.5" width="5" height="5" fill="#ff0000"/><rect x="336.5" y="395.5" width="5" height="5" fill="#ff0000"/><rect x="461.5" y="395.5" width="5" height="5" fill="#ff0000"/><rect x="463.5" y="434.5" width="5" height="5" fill="#ff0000"/><rect x="471.5" y="434.5" width="5" height="5" fill="#ff0000"/><rect x="460.5" y="522.5" width="5" height="5" fill="#ff0000"/><rect x="474.5" y="522.5" width="5" height="5" fill="#ff0000"/><rect x="335.5" y="599.5" width="5" height="5" fill="#ff0000"/><rect x="458.5" y="599.5" width="5" height="5" fill="#ff0000"/><rect x="335.5" y="608.5" width="5" height="5" fill="#ff0000"/><rect x="452.5" y="608.5" width="5" height="5" fill="#ff0000"/><rect x="332.5" y="676.5" width="5" height="5" fill="#ff0000"/><rect x="430.5" y="676.5" width="5" height="5" fill="#ff0000"/><rect x="221.5" y="681.5" width="5" height="5" fill="#ff0000"/><rect x="221.5" y="687.5" width="5" height="5" fill="#ff0000"/><rect x="323.5" y="693.5" width="5" height="5" fill="#ff0000"/><rect x="428.5" y="693.5" width="5" height="5" fill="#ff0000"/><rect x="120.5" y="379.5" width="5" height="5" fill="#ff0000"/><rect x="126.5" y="379.5" width="5" height="5" fill="#ff0000"/><rect x="434.5" y="682.5" width="5" height="5" fill="#ff0000"/><rect x="436.5" y="693.5" width="5" height="5" fill="#ff0000"/><rect x="131" y="158" width="2" height="560" fill="#ff33cc"/><rect x="129" y="156" width="6" height="6" fill="#ff33cc"/><text x="132" y="511" font-family="Liberation Sans" font-weight="bold" font-size="13.5" fill="#ff22cc">20 метров</text><rect x="306" y="29" width="6" height="6" fill="#000" transform="rotate(-30 309 32)"/><text x="310" y="32" font-family="Liberation Sans" font-weight="bold" font-size="13" fill="#000">#1</text><rect x="242" y="55" width="6" height="6" fill="#000" transform="rotate(-30 245 58)"/><text x="246" y="58" font-family="Liberation Sans" font-weight="bold" font-size="13" fill="#000">#4</text><rect x="371" y="115" width="6" height="6" fill="#000" transform="rotate(-30 374 118)"/><text x="375" y="118" font-family="Liberation Sans" font-weight="bold" font-size="13" fill="#000">#2</text><rect x="214" y="127" width="6" height="6" fill="#000" transform="rotate(-30 217 130)"/><text x="218" y="130" font-family="Liberation Sans" font-weight="bold" font-size="13" fill="#000">#5</text><rect x="413" y="189" width="6" height="6" fill="#000" transform="rotate(-30 416 192)"/><text x="417" y="192" font-family="Liberation Sans" font-weight="bold" font-size="13" fill="#000">#3</text><rect x="443" y="267" width="6" height="6" fill="#000" transform="rotate(-30 446 270)"/><text x="447" y="270" font-family="Liberation Sans" font-weight="bold" font-size="13" fill="#000">#1</text><rect x="465" y="358" width="6" height="6" fill="#000" transform="rotate(-30 468 361)"/><text x="469" y="361" font-family="Liberation Sans" font-weight="bold" font-size="13" fill="#000">#2</text><rect x="471" y="402" width="6" height="6" fill="#000" transform="rotate(-30 474 405)"/><text x="475" y="405" font-family="Liberation Sans" font-weight="bold" font-size="13" fill="#000">#2</text><rect x="473" y="480" width="6" height="6" fill="#000" transform="rotate(-30 476 483)"/><text x="477" y="483" font-family="Liberation Sans" font-weight="bold" font-size="13" fill="#000">#1</text><rect x="469" y="559" width="6" height="6" fill="#000" transform="rotate(-30 472 562)"/><text x="473" y="562" font-family="Liberation Sans" font-weight="bold" font-size="13" fill="#000">#3</text><rect x="452" y="640" width="6" height="6" fill="#22dd22" transform="rotate(-30 455 643)"/><text x="456" y="643" font-family="Liberation Sans" font-weight="bold" font-size="13" fill="#22dd22">#1</text><rect x="304" y="133" width="5" height="5" fill="#ff0000"/><text x="307" y="137" font-family="Liberation Sans" font-weight="bold" font-size="14" fill="#ff0000">@1</text><rect x="398" y="307" width="5" height="5" fill="#ff0000"/><text x="401" y="311" font-family="Liberation Sans" font-weight="bold" font-size="14" fill="#ff0000">@1</text><rect x="370" y="497" width="5" height="5" fill="#ff0000"/><text x="373" y="501" font-family="Liberation Sans" font-weight="bold" font-size="14" fill="#ff0000">@2</text><rect x="399" y="497" width="5" height="5" fill="#ff0000"/><text x="402" y="501" font-family="Liberation Sans" font-weight="bold" font-size="14" fill="#ff0000">@1</text><rect x="370" y="635" width="5" height="5" fill="#ff0000"/><text x="373" y="639" font-family="Liberation Sans" font-weight="bold" font-size="14" fill="#ff0000">@2</text><rect x="392" y="641" width="5" height="5" fill="#ff0000"/><text x="395" y="645" font-family="Liberation Sans" font-weight="bold" font-size="14" fill="#ff0000">@1</text><polyline points="289.0,15.0 326.0,52.0" fill="none" stroke="#111" stroke-width="1.5"/><polyline points="265.0,48.0 251.0,81.0" fill="none" stroke="#111" stroke-width="1.5"/><polyline points="229.0,113.0 214.0,150.0" fill="none" stroke="#111" stroke-width="1.5"/><polyline points="366.0,97.0 394.0,147.0" fill="none" stroke="#111" stroke-width="1.5"/><polyline points="413.0,173.0 426.0,210.0" fill="none" stroke="#111" stroke-width="1.5"/><polyline points="443.0,240.0 454.0,280.0" fill="none" stroke="#111" stroke-width="1.5"/><polyline points="465.0,343.0 471.0,385.0" fill="none" stroke="#111" stroke-width="1.5"/><polyline points="473.0,393.0 475.0,430.0" fill="none" stroke="#111" stroke-width="1.5"/><polyline points="476.0,455.0 477.0,495.0" fill="none" stroke="#111" stroke-width="1.5"/><polyline points="474.0,545.0 469.0,585.0" fill="none" stroke="#111" stroke-width="1.5"/></g></svg><div class="a" style="left:647px;top:858px;width:536px;height:30px;background:#dde4ee;border-bottom:1px solid #a8a8a8;border-right:1px solid #a8a8a8"></div><div class="a" style="left:656px;top:862px;width:309px;height:20px;background:#fff;border:1px solid #7a7a7a;border-right-color:#fff;border-bottom-color:#fff"></div><div class="t" style="left:660px;top:866px;font-size:12px">Сдвиг объекта, м</div><div class="a" style="left:947px;top:864px;width:17px;height:16px;background:#e4e4e4;border:1px solid #b0b0b0"></div><svg style="left:951px;top:870px" width="9" height="5"><path d="M0 0 L9 0 L4.5 5 Z" fill="#000"/></svg><div class="t" style="left:974px;top:862px;font-size:12px">X</div><div class="a" style="left:991px;top:862px;width:51px;height:20px;background:#fff;border:1px solid #7a7a7a;border-right-color:#fff;border-bottom-color:#fff"></div><div class="t" style="left:995px;top:866px;font-size:12px">0</div><div class="t" style="left:1050px;top:862px;font-size:12px">Y</div><div class="a" style="left:1067px;top:862px;width:51px;height:20px;background:#fff;border:1px solid #7a7a7a;border-right-color:#fff;border-bottom-color:#fff"></div><div class="t" style="left:1071px;top:866px;font-size:12px">0</div><div class="a" style="left:647px;top:892px;width:909px;height:19px;background:#dde4ee;border-top:1px solid #b0b0b0"></div><div class="a" style="left:648px;top:896px;width:205px;height:10px;border:1px solid #b0b0b0;border-bottom-color:#fff;border-right-color:#fff"></div><div class="a" style="left:854px;top:893px;width:1px;height:18px;background:#a8a8a8"></div><div class="a" style="left:1210px;top:893px;width:1px;height:18px;background:#a8a8a8"></div><div class="t" style="left:857px;top:896px;font-size:12px">X = 1,94 м; Y = -21,30 м</div><div class="t" style="left:1214px;top:896px;font-size:12px">Наименование объекта</div><div class="a" style="left:1183px;top:127px;width:3px;height:763px;background:#c8c8c8"></div><div class="a" style="left:1186px;top:127px;width:1px;height:763px;background:#fff"></div><div class="a" style="left:1193px;top:105px;width:1px;height:19px;background:#b0b0b0"></div><div class="t" style="left:1198px;top:108px;font-size:11.4px">Масштаб сцены</div><div class="a" style="left:1286px;top:104px;width:74px;height:19px;background:#fff;border:1px solid #7a7a7a;border-right-color:#e8e8e8;border-bottom-color:#e8e8e8"></div><div class="a" style="left:1288px;top:106px;width:29px;height:15px;background:#0078d7"></div><div class="t" style="left:1289px;top:108px;font-size:11.4px;color:#fff">100%</div><div class="a" style="left:1342px;top:105px;width:17px;height:17px;background:#e6e6e6;border:1px solid #b8b8b8"></div><svg style="left:1346px;top:111px" width="9" height="5"><path d="M0 0 L9 0 L4.5 5 Z" fill="#000"/></svg><div class="t" style="left:1362px;top:108px;font-size:11.4px">Шаг сетки</div><div class="a" style="left:1420px;top:104px;width:54px;height:19px;background:#fff;border:1px solid #7a7a7a;border-right-color:#e8e8e8;border-bottom-color:#e8e8e8"></div><div class="a" style="left:1422px;top:106px;width:15px;height:15px;background:#0078d7"></div><div class="t" style="left:1423px;top:108px;font-size:11.4px;color:#fff">10</div><div class="a" style="left:1457px;top:105px;width:17px;height:17px;background:#e6e6e6;border:1px solid #b8b8b8"></div><svg style="left:1461px;top:111px" width="9" height="5"><path d="M0 0 L9 0 L4.5 5 Z" fill="#000"/></svg><div class="a" style="left:1187px;top:147px;width:368px;height:742px;background:#dde4ee;border-top:1px solid #fff;border-right:1px solid #a0a0a0"></div><div class="a" style="left:1189px;top:127px;width:126px;height:21px;background:linear-gradient(#f4f6f9,#dde4ee);border-right:2px solid #8c8c8c;border-top:1px solid #fff"></div><div class="t" style="left:1194px;top:131px;font-size:11.6px">Объекты библиотеки</div><div class="a" style="left:1315px;top:130px;width:92px;height:18px;background:linear-gradient(#f2f4f7,#d7dee8);border-right:2px solid #8c8c8c;border-top:1px solid #fff"></div><div class="t" style="left:1320px;top:132px;font-size:11.6px">Типы объектов</div><div class="a" style="left:1407px;top:130px;width:69px;height:18px;background:linear-gradient(#f2f4f7,#d7dee8);border-right:2px solid #8c8c8c;border-top:1px solid #fff"></div><div class="t" style="left:1412px;top:132px;font-size:11.6px">Настройки</div><div class="a" style="left:1476px;top:130px;width:72px;height:18px;background:linear-gradient(#f2f4f7,#d7dee8);border-right:2px solid #8c8c8c;border-top:1px solid #fff"></div><div class="t" style="left:1481px;top:132px;font-size:11.6px">Интерфейс</div><div class="a" style="left:1195px;top:156px;width:353px;height:250px;background:#c9c9c9"></div><svg style="left:1195px;top:156px" width="353" height="250" viewBox="0 0 353 250"><polygon points="84.7,36.2 186.6,39.3 186.6,103.5 285.4,107.5 289.5,111.6 288.5,203.3 281.3,205.3 271.2,207.4 270.1,232.8 214.1,217.6 175.4,236.9 142.8,239.6 112.2,234.9 99.0,219.6 95.9,214.5 59.3,210.4 55.2,178.8 91.9,164.6 91.5,123.8" fill="#a6a6a6" /><polygon points="84.7,36.2 186.6,39.3 186.6,103.5 159.1,104.5 112.2,121.8 91.5,123.8" fill="#8e8e8e" /><rect x="93.9" y="52.5" width="5" height="4.5" fill="#2e2e2e"/><rect x="104.1" y="52.5" width="5" height="4.5" fill="#2e2e2e"/><rect x="114.3" y="52.5" width="5" height="4.5" fill="#2e2e2e"/><rect x="122.4" y="52.5" width="5" height="4.5" fill="#2e2e2e"/><rect x="130.6" y="52.5" width="5" height="4.5" fill="#2e2e2e"/><rect x="140.8" y="52.5" width="5" height="4.5" fill="#2e2e2e"/><rect x="150.9" y="52.5" width="5" height="4.5" fill="#2e2e2e"/><rect x="161.1" y="52.5" width="5" height="4.5" fill="#2e2e2e"/><rect x="171.3" y="52.5" width="5" height="4.5" fill="#2e2e2e"/><rect x="179.5" y="52.5" width="4" height="4.5" fill="#2e2e2e"/><rect x="85.7" y="54.6" width="4" height="6" fill="#000"/><rect x="175.4" y="56.6" width="8" height="5" fill="none" stroke="#00c8c8" stroke-width="1.2"/><rect x="99.0" y="57.6" width="10" height="5" fill="none" stroke="#00c8c8" stroke-width="1.2"/><rect x="93.9" y="63.1" width="5" height="4.5" fill="#2e2e2e"/><rect x="104.1" y="63.1" width="5" height="4.5" fill="#2e2e2e"/><rect x="114.3" y="63.1" width="5" height="4.5" fill="#2e2e2e"/><rect x="122.4" y="63.1" width="5" height="4.5" fill="#2e2e2e"/><rect x="130.6" y="63.1" width="5" height="4.5" fill="#2e2e2e"/><rect x="140.8" y="63.1" width="5" height="4.5" fill="#2e2e2e"/><rect x="150.9" y="63.1" width="5" height="4.5" fill="#2e2e2e"/><rect x="161.1" y="63.1" width="5" height="4.5" fill="#2e2e2e"/><rect x="171.3" y="63.1" width="5" height="4.5" fill="#2e2e2e"/><rect x="179.5" y="63.1" width="4" height="4.5" fill="#2e2e2e"/><rect x="85.7" y="65.2" width="4" height="6" fill="#000"/><rect x="175.4" y="67.2" width="8" height="5" fill="none" stroke="#00c8c8" stroke-width="1.2"/><rect x="99.0" y="68.2" width="10" height="5" fill="none" stroke="#00c8c8" stroke-width="1.2"/><rect x="93.9" y="73.7" width="5" height="4.5" fill="#2e2e2e"/><rect x="104.1" y="73.7" width="5" height="4.5" fill="#2e2e2e"/><rect x="114.3" y="73.7" width="5" height="4.5" fill="#2e2e2e"/><rect x="122.4" y="73.7" width="5" height="4.5" fill="#2e2e2e"/><rect x="130.6" y="73.7" width="5" height="4.5" fill="#2e2e2e"/><rect x="140.8" y="73.7" width="5" height="4.5" fill="#2e2e2e"/><rect x="150.9" y="73.7" width="5" height="4.5" fill="#2e2e2e"/><rect x="161.1" y="73.7" width="5" height="4.5" fill="#2e2e2e"/><rect x="171.3" y="73.7" width="5" height="4.5" fill="#2e2e2e"/><rect x="179.5" y="73.7" width="4" height="4.5" fill="#2e2e2e"/><rect x="85.7" y="75.8" width="4" height="6" fill="#000"/><rect x="175.4" y="77.8" width="8" height="5" fill="none" stroke="#00c8c8" stroke-width="1.2"/><rect x="99.0" y="78.8" width="10" height="5" fill="none" stroke="#00c8c8" stroke-width="1.2"/><rect x="93.9" y="84.3" width="5" height="4.5" fill="#2e2e2e"/><rect x="104.1" y="84.3" width="5" height="4.5" fill="#2e2e2e"/><rect x="114.3" y="84.3" width="5" height="4.5" fill="#2e2e2e"/><rect x="122.4" y="84.3" width="5" height="4.5" fill="#2e2e2e"/><rect x="130.6" y="84.3" width="5" height="4.5" fill="#2e2e2e"/><rect x="140.8" y="84.3" width="5" height="4.5" fill="#2e2e2e"/><rect x="150.9" y="84.3" width="5" height="4.5" fill="#2e2e2e"/><rect x="161.1" y="84.3" width="5" height="4.5" fill="#2e2e2e"/><rect x="171.3" y="84.3" width="5" height="4.5" fill="#2e2e2e"/><rect x="179.5" y="84.3" width="4" height="4.5" fill="#2e2e2e"/><rect x="85.7" y="86.3" width="4" height="6" fill="#000"/><rect x="175.4" y="88.4" width="8" height="5" fill="none" stroke="#00c8c8" stroke-width="1.2"/><rect x="99.0" y="89.4" width="10" height="5" fill="none" stroke="#00c8c8" stroke-width="1.2"/><rect x="93.9" y="94.9" width="5" height="4.5" fill="#2e2e2e"/><rect x="104.1" y="94.9" width="5" height="4.5" fill="#2e2e2e"/><rect x="114.3" y="94.9" width="5" height="4.5" fill="#2e2e2e"/><rect x="122.4" y="94.9" width="5" height="4.5" fill="#2e2e2e"/><rect x="130.6" y="94.9" width="5" height="4.5" fill="#2e2e2e"/><rect x="140.8" y="94.9" width="5" height="4.5" fill="#2e2e2e"/><rect x="150.9" y="94.9" width="5" height="4.5" fill="#2e2e2e"/><rect x="161.1" y="94.9" width="5" height="4.5" fill="#2e2e2e"/><rect x="171.3" y="94.9" width="5" height="4.5" fill="#2e2e2e"/><rect x="179.5" y="94.9" width="4" height="4.5" fill="#2e2e2e"/><rect x="85.7" y="96.9" width="4" height="6" fill="#000"/><rect x="175.4" y="99.0" width="8" height="5" fill="none" stroke="#00c8c8" stroke-width="1.2"/><rect x="99.0" y="100.0" width="10" height="5" fill="none" stroke="#00c8c8" stroke-width="1.2"/><rect x="93.9" y="105.5" width="5" height="4.5" fill="#2e2e2e"/><rect x="104.1" y="105.5" width="5" height="4.5" fill="#2e2e2e"/><rect x="114.3" y="105.5" width="5" height="4.5" fill="#2e2e2e"/><rect x="122.4" y="105.5" width="5" height="4.5" fill="#2e2e2e"/><rect x="130.6" y="105.5" width="5" height="4.5" fill="#2e2e2e"/><rect x="140.8" y="105.5" width="5" height="4.5" fill="#2e2e2e"/><rect x="150.9" y="105.5" width="5" height="4.5" fill="#2e2e2e"/><rect x="161.1" y="105.5" width="5" height="4.5" fill="#2e2e2e"/><rect x="171.3" y="105.5" width="5" height="4.5" fill="#2e2e2e"/><rect x="179.5" y="105.5" width="4" height="4.5" fill="#2e2e2e"/><rect x="85.7" y="107.5" width="4" height="6" fill="#000"/><rect x="175.4" y="109.6" width="8" height="5" fill="none" stroke="#00c8c8" stroke-width="1.2"/><rect x="99.0" y="110.6" width="10" height="5" fill="none" stroke="#00c8c8" stroke-width="1.2"/><text x="90.8" y="49.5" font-family="Liberation Sans" font-weight="bold" font-size="11" fill="#111" textLength="84" lengthAdjust="spacingAndGlyphs">#5#4#3 #2 #2 #1</text><text x="175.4" y="49.5" font-family="Liberation Sans" font-weight="bold" font-size="11" fill="#000">#2</text><polygon points="110.2,170.7 159.1,150.3 248.7,166.6 269.1,178.8 226.3,181.9 199.8,179.9 167.2,190.1 136.7,193.1" fill="#909090" /><polygon points="98.0,213.5 112.2,234.9 142.8,239.6 175.4,236.9 214.1,217.6 270.1,232.8 271.2,207.4 224.3,199.2 187.6,203.3 136.7,203.3 106.1,199.2" fill="#959595" /><polyline points="86.8,48.4 186.6,50.1" fill="none" stroke="#ff2020" stroke-width="1"/><polyline points="86.8,59.0 186.6,60.7" fill="none" stroke="#ff2020" stroke-width="1"/><polyline points="86.8,69.6 186.6,71.3" fill="none" stroke="#ff2020" stroke-width="1"/><polyline points="86.8,80.2 186.6,81.9" fill="none" stroke="#ff2020" stroke-width="1"/><polyline points="86.8,90.8 186.6,92.5" fill="none" stroke="#ff2020" stroke-width="1"/><polyline points="86.8,101.4 186.6,103.1" fill="none" stroke="#ff2020" stroke-width="1"/><polyline points="86.8,112.0 186.6,113.6" fill="none" stroke="#ff2020" stroke-width="1"/><polyline points="86.8,37.2 87.4,121.8" fill="none" stroke="#ff2020" stroke-width="1"/><polyline points="98.0,37.2 98.6,121.8" fill="none" stroke="#ff2020" stroke-width="1"/><polyline points="112.2,37.2 112.8,121.8" fill="none" stroke="#ff2020" stroke-width="1"/><polyline points="132.6,37.2 133.2,121.8" fill="none" stroke="#ff2020" stroke-width="1"/><polyline points="148.9,37.2 149.5,121.8" fill="none" stroke="#ff2020" stroke-width="1"/><polyline points="159.1,37.2 159.7,103.5" fill="none" stroke="#ff2020" stroke-width="1"/><polyline points="175.4,37.2 175.4,103.5" fill="none" stroke="#ff2020" stroke-width="1"/><polyline points="186.6,37.2 186.6,103.5" fill="none" stroke="#ff2020" stroke-width="1"/><polyline points="91.5,121.8 93.5,193.1" fill="none" stroke="#ff2020" stroke-width="0.9"/><polyline points="98.0,121.8 100.0,193.1" fill="none" stroke="#ff2020" stroke-width="0.9"/><polyline points="112.2,121.8 114.3,193.1" fill="none" stroke="#ff2020" stroke-width="0.9"/><polyline points="132.6,121.8 134.6,193.1" fill="none" stroke="#ff2020" stroke-width="0.9"/><polyline points="148.9,121.8 150.9,193.1" fill="none" stroke="#ff2020" stroke-width="0.9"/><polyline points="159.1,121.8 161.1,193.1" fill="none" stroke="#ff2020" stroke-width="0.9"/><polyline points="91.5,123.8 93.9,187.0 100.0,227.7 112.2,234.9" fill="none" stroke="#ff2020" stroke-width="1"/><polyline points="159.1,104.5 285.4,108.6" fill="none" stroke="#ff2020" stroke-width="1"/><polyline points="159.1,115.7 285.4,119.8" fill="none" stroke="#ff2020" stroke-width="1"/><polyline points="159.1,126.9 285.4,131.0" fill="none" stroke="#ff2020" stroke-width="1"/><polyline points="159.1,138.1 285.4,142.2" fill="none" stroke="#ff2020" stroke-width="1"/><polyline points="159.1,149.3 285.4,153.4" fill="none" stroke="#ff2020" stroke-width="1"/><polyline points="159.1,160.5 285.4,164.6" fill="none" stroke="#ff2020" stroke-width="1"/><polyline points="159.1,171.7 285.4,175.8" fill="none" stroke="#ff2020" stroke-width="1"/><polyline points="159.1,182.9 285.4,187.0" fill="none" stroke="#ff2020" stroke-width="1"/><polyline points="159.1,104.5 285.4,107.5 289.5,111.6 288.5,203.3" fill="none" stroke="#ff2020" stroke-width="1"/><polyline points="285.4,107.5 285.4,203.3" fill="none" stroke="#ff2020" stroke-width="0.8"/><polyline points="55.2,178.8 91.9,164.6" fill="none" stroke="#ff2020" stroke-width="1"/><polyline points="55.2,178.8 57.2,199.2 59.3,210.4 95.9,214.5" fill="none" stroke="#ff2020" stroke-width="1"/><polyline points="57.2,199.2 93.9,187.0" fill="none" stroke="#ff2020" stroke-width="1"/><polyline points="55.2,178.8 93.9,182.9" fill="none" stroke="#ff2020" stroke-width="0.8"/><polyline points="98.0,213.5 112.2,234.9 142.8,239.6 175.4,236.9 214.1,217.6 270.1,232.8" fill="none" stroke="#ff2020" stroke-width="1"/><polyline points="95.9,197.2 112.2,207.4 136.7,215.5 175.4,213.5 199.8,203.3 214.1,217.6" fill="none" stroke="#ff2020" stroke-width="0.9"/><polyline points="106.1,178.8 130.6,199.2 167.2,192.1 199.8,180.9 226.3,181.9 224.3,199.2 271.2,207.4" fill="none" stroke="#ff2020" stroke-width="0.9"/><polyline points="110.2,170.7 159.1,150.3 248.7,166.6" fill="none" stroke="#ff2020" stroke-width="0.9"/><polyline points="102.0,216.5 102.0,227.7" fill="none" stroke="#ff2020" stroke-width="0.9"/><polyline points="112.2,207.4 112.2,234.9" fill="none" stroke="#ff2020" stroke-width="0.9"/><polyline points="122.4,210.4 122.4,237.9" fill="none" stroke="#ff2020" stroke-width="0.9"/><polyline points="132.6,213.5 132.6,239.0" fill="none" stroke="#ff2020" stroke-width="0.9"/><polyline points="142.8,215.5 142.8,239.6" fill="none" stroke="#ff2020" stroke-width="0.9"/><polyline points="153.0,215.5 153.0,239.0" fill="none" stroke="#ff2020" stroke-width="0.9"/><polyline points="163.2,214.5 163.2,237.9" fill="none" stroke="#ff2020" stroke-width="0.9"/><polyline points="175.4,213.5 175.4,236.9" fill="none" stroke="#ff2020" stroke-width="0.9"/><polyline points="187.6,208.4 187.6,229.8" fill="none" stroke="#ff2020" stroke-width="0.9"/><polyline points="199.8,203.3 199.8,223.7" fill="none" stroke="#ff2020" stroke-width="0.9"/><polyline points="136.7,193.1 136.7,215.5" fill="none" stroke="#ff2020" stroke-width="0.9"/><polyline points="146.9,192.1 146.9,215.5" fill="none" stroke="#ff2020" stroke-width="0.9"/><polyline points="159.1,191.1 159.1,214.5" fill="none" stroke="#ff2020" stroke-width="0.9"/><polyline points="171.3,190.1 171.3,213.5" fill="none" stroke="#ff2020" stroke-width="0.9"/><polyline points="187.6,185.0 187.6,208.4" fill="none" stroke="#ff2020" stroke-width="0.9"/><polyline points="199.8,180.9 199.8,203.3" fill="none" stroke="#ff2020" stroke-width="0.9"/><polyline points="214.1,181.9 214.1,217.6" fill="none" stroke="#ff2020" stroke-width="0.9"/><polyline points="269.1,172.7 269.1,231.8" fill="none" stroke="#ff2020" stroke-width="0.8"/><polyline points="271.2,172.7 271.2,231.8" fill="none" stroke="#ff2020" stroke-width="0.8"/><polyline points="281.3,172.7 281.3,231.8" fill="none" stroke="#ff2020" stroke-width="0.8"/></svg><div class="t" style="left:1191px;top:415px;font-size:11.6px">Поиск</div><div class="a" style="left:1224px;top:413px;width:291px;height:14px;background:#fff;border-top:1px solid #6a6a6a;border-left:1px solid #6a6a6a;border-bottom:1px solid #f0f0f0"></div><div class="a" style="left:1191px;top:438px;width:361px;height:172px;background:#fff;border-top:1px solid #6a6a6a;border-left:1px solid #6a6a6a"></div><div class="a" style="left:1535px;top:440px;width:17px;height:169px;background:#f0f0f0"></div><div class="a" style="left:1536px;top:517px;width:15px;height:77px;background:#cdcdcd"></div><svg style="left:1538px;top:445px" width="10" height="160"><path d="M1 6 L5 2 L9 6" stroke="#444" stroke-width="1.5" fill="none"/><path d="M1 152 L5 156 L9 152" stroke="#444" stroke-width="1.5" fill="none"/></svg><div class="a" style="left:1241px;top:438px;width:1px;height:6px;border-left:1px dotted #a0a0a0"></div><div class="a" style="left:1236px;top:444px;width:9px;height:9px;background:#fff;border:1px solid #8a8a8a"><div style="position:absolute;left:1px;top:3px;width:5px;height:1px;background:#000"></div></div><div class="a" style="left:1246px;top:448px;width:6px;height:1px;border-top:1px dotted #a0a0a0"></div><div class="a" style="left:1252px;top:440px;width:16px;height:16px;background:#cfe8fb;border:2px solid #1787ff;box-shadow:1px 1px 0 #a8b8c8"></div><div class="t" style="left:1274px;top:441px;font-size:11.6px">Группа этажей 9-14</div><div class="a" style="left:1256px;top:461px;width:9px;height:9px;background:#fff;border:1px solid #8a8a8a"><div style="position:absolute;left:1px;top:3px;width:5px;height:1px;background:#000"></div></div><div class="a" style="left:1266px;top:465px;width:6px;height:1px;border-top:1px dotted #a0a0a0"></div><div class="a" style="left:1272px;top:457px;width:16px;height:16px;background:#cfe8fb;border:1px solid #9cc8ee;box-shadow:1px 1px 0 #a8b8c8"><div style="position:absolute;left:2px;top:2px;width:10px;height:10px;border:2px solid #1787ff;background:#cfe8fb"></div></div><div class="t" style="left:1294px;top:458px;font-size:11.6px">Квартира1</div><div class="a" style="left:1276px;top:477px;width:9px;height:9px;background:#fff;border:1px solid #8a8a8a"><div style="position:absolute;left:1px;top:3px;width:5px;height:1px;background:#000"></div><div style="position:absolute;left:3px;top:1px;width:1px;height:5px;background:#000"></div></div><div class="a" style="left:1286px;top:481px;width:6px;height:1px;border-top:1px dotted #a0a0a0"></div><div class="a" style="left:1292px;top:473px;width:16px;height:16px;background:#cfe8fb;border:1px solid #9cc8ee;box-shadow:1px 1px 0 #a8b8c8"><div style="position:absolute;left:4px;top:4px;width:6px;height:6px;border:2px solid #1787ff;background:#fff"></div></div><div class="t" style="left:1313px;top:474px;font-size:11.6px">Комната1</div><div class="a" style="left:1276px;top:494px;width:9px;height:9px;background:#fff;border:1px solid #8a8a8a"><div style="position:absolute;left:1px;top:3px;width:5px;height:1px;background:#000"></div><div style="position:absolute;left:3px;top:1px;width:1px;height:5px;background:#000"></div></div><div class="a" style="left:1286px;top:498px;width:6px;height:1px;border-top:1px dotted #a0a0a0"></div><div class="a" style="left:1292px;top:490px;width:16px;height:16px;background:#cfe8fb;border:1px solid #9cc8ee;box-shadow:1px 1px 0 #a8b8c8"><div style="position:absolute;left:4px;top:4px;width:6px;height:6px;border:2px solid #1787ff;background:#fff"></div></div><div class="t" style="left:1313px;top:491px;font-size:11.6px">Комната2</div><div class="a" style="left:1276px;top:510px;width:9px;height:9px;background:#fff;border:1px solid #8a8a8a"><div style="position:absolute;left:1px;top:3px;width:5px;height:1px;background:#000"></div><div style="position:absolute;left:3px;top:1px;width:1px;height:5px;background:#000"></div></div><div class="a" style="left:1286px;top:514px;width:6px;height:1px;border-top:1px dotted #a0a0a0"></div><div class="a" style="left:1292px;top:506px;width:16px;height:16px;background:#cfe8fb;border:1px solid #9cc8ee;box-shadow:1px 1px 0 #a8b8c8"><div style="position:absolute;left:4px;top:4px;width:6px;height:6px;border:2px solid #1787ff;background:#fff"></div></div><div class="t" style="left:1313px;top:507px;font-size:11.6px">Комната3</div><div class="a" style="left:1276px;top:527px;width:9px;height:9px;background:#fff;border:1px solid #8a8a8a"><div style="position:absolute;left:1px;top:3px;width:5px;height:1px;background:#000"></div></div><div class="a" style="left:1286px;top:531px;width:6px;height:1px;border-top:1px dotted #a0a0a0"></div><div class="a" style="left:1292px;top:523px;width:16px;height:16px;background:#cfe8fb;border:1px solid #9cc8ee;box-shadow:1px 1px 0 #a8b8c8"><div style="position:absolute;left:4px;top:4px;width:6px;height:6px;border:2px solid #1787ff;background:#fff"></div></div><div class="t" style="left:1313px;top:524px;font-size:11.6px">Комната4</div><div class="a" style="left:1256px;top:594px;width:9px;height:9px;background:#fff;border:1px solid #8a8a8a"><div style="position:absolute;left:1px;top:3px;width:5px;height:1px;background:#000"></div><div style="position:absolute;left:3px;top:1px;width:1px;height:5px;background:#000"></div></div><div class="a" style="left:1266px;top:598px;width:6px;height:1px;border-top:1px dotted #a0a0a0"></div><div class="a" style="left:1272px;top:590px;width:16px;height:16px;background:#cfe8fb;border:1px solid #9cc8ee;box-shadow:1px 1px 0 #a8b8c8"><div style="position:absolute;left:2px;top:2px;width:10px;height:10px;border:2px solid #1787ff;background:#cfe8fb"></div></div><div class="t" style="left:1294px;top:591px;font-size:11.6px">Квартира2</div><div class="a" style="left:1261px;top:470px;width:1px;height:128px;border-left:1px dotted #a0a0a0"></div><div class="a" style="left:1281px;top:486px;width:1px;height:45px;border-left:1px dotted #a0a0a0"></div><div class="a" style="left:1301px;top:540px;width:1px;height:50px;border-left:1px dotted #a0a0a0"></div><div class="a" style="left:1302px;top:548px;width:14px;height:1px;border-top:1px dotted #a0a0a0"></div><div class="a" style="left:1317px;top:540px;width:11px;height:16px;background:#cfe8fb;border:2px solid #1787ff"><div style="position:absolute;left:3px;top:1px;width:1px;height:11px;background:#1787ff"></div></div><div class="t" style="left:1334px;top:541px;font-size:11.6px">#1</div><div class="a" style="left:1302px;top:564px;width:14px;height:1px;border-top:1px dotted #a0a0a0"></div><div class="a" style="left:1317px;top:556px;width:11px;height:16px;background:#cfe8fb;border:2px solid #1787ff"><div style="position:absolute;left:3px;top:1px;width:1px;height:11px;background:#1787ff"></div></div><div class="t" style="left:1334px;top:557px;font-size:11.6px">@1</div><div class="a" style="left:1302px;top:581px;width:14px;height:1px;border-top:1px dotted #a0a0a0"></div><div class="a" style="left:1317px;top:573px;width:11px;height:16px;background:#cfe8fb;border:2px solid #1787ff"><div style="position:absolute;left:3px;top:1px;width:1px;height:11px;background:#1787ff"></div></div><div class="t" style="left:1334px;top:574px;font-size:11.6px">@2</div><div class="a" style="left:1330px;top:540px;width:18px;height:16px;background:#ececec"></div><div class="t" style="left:1334px;top:541px;font-size:11.6px">#1</div><div class="a" style="left:1311px;top:537px;width:5px;height:5px;background:#f0e040"></div><div class="a" style="left:1313px;top:566px;width:3px;height:3px;background:#e00"></div><div class="a" style="left:1313px;top:583px;width:3px;height:3px;background:#e00"></div><div class="a" style="left:1191px;top:616px;width:361px;height:266px;background:#fff;border-top:1px solid #6a6a6a;border-left:1px solid #6a6a6a"></div><div class="a" style="left:1192px;top:617px;width:341px;height:21px;background:#dde4ee;border-bottom:2px solid #404040;border-right:2px solid #404040"></div><div class="a" style="left:1315px;top:617px;width:2px;height:21px;background:#404040"></div><div class="t" style="left:1196px;top:621px;font-size:11.4px">Свойство</div><div class="t" style="left:1319px;top:621px;font-size:11.4px">Значение</div><div class="a" style="left:1534px;top:617px;width:18px;height:264px;background:#f0f0f0"></div><div class="a" style="left:1535px;top:845px;width:16px;height:19px;background:#cdcdcd"></div><svg style="left:1538px;top:622px" width="10" height="254"><path d="M1 6 L5 2 L9 6" stroke="#444" stroke-width="1.5" fill="none"/><path d="M1 248 L5 252 L9 248" stroke="#444" stroke-width="1.5" fill="none"/></svg><div class="a" style="left:1192px;top:654px;width:341px;height:1px;background:#d4d4d4"></div><div class="a" style="left:1315px;top:638px;width:1px;height:17px;background:#d4d4d4"></div><div class="t" style="left:1195px;top:641.5px;width:119px;overflow:hidden;font-size:11.4px">Ширина правой панели</div><div class="t" style="left:1318px;top:641.5px;width:215px;overflow:hidden;font-size:11.4px">0,00</div><div class="a" style="left:1192px;top:671px;width:341px;height:1px;background:#d4d4d4"></div><div class="a" style="left:1315px;top:655px;width:1px;height:17px;background:#d4d4d4"></div><div class="t" style="left:1195px;top:658.1px;width:119px;overflow:hidden;font-size:11.4px">Ширина панели козырька</div><div class="t" style="left:1318px;top:658.1px;width:215px;overflow:hidden;font-size:11.4px">0,00</div><div class="a" style="left:1192px;top:688px;width:341px;height:1px;background:#d4d4d4"></div><div class="a" style="left:1315px;top:672px;width:1px;height:17px;background:#d4d4d4"></div><div class="t" style="left:1195px;top:674.7px;width:119px;overflow:hidden;font-size:11.4px">Четверть + толщ. стек.</div><div class="t" style="left:1318px;top:674.7px;width:215px;overflow:hidden;font-size:11.4px">0,12</div><div class="a" style="left:1192px;top:704px;width:341px;height:1px;background:#d4d4d4"></div><div class="a" style="left:1315px;top:688px;width:1px;height:17px;background:#d4d4d4"></div><div class="t" style="left:1195px;top:691.3px;width:119px;overflow:hidden;font-size:11.4px">Расст. до левой панели</div><div class="t" style="left:1318px;top:691.3px;width:215px;overflow:hidden;font-size:11.4px">0,00</div><div class="a" style="left:1192px;top:721px;width:341px;height:1px;background:#d4d4d4"></div><div class="a" style="left:1315px;top:705px;width:1px;height:17px;background:#d4d4d4"></div><div class="t" style="left:1195px;top:707.9px;width:119px;overflow:hidden;font-size:11.4px">Расст. до правой панели</div><div class="t" style="left:1318px;top:707.9px;width:215px;overflow:hidden;font-size:11.4px">0,00</div><div class="a" style="left:1192px;top:738px;width:341px;height:1px;background:#d4d4d4"></div><div class="a" style="left:1315px;top:722px;width:1px;height:17px;background:#d4d4d4"></div><div class="t" style="left:1195px;top:724.5px;width:119px;overflow:hidden;font-size:11.4px">Расст. до козырька, ТН</div><div class="t" style="left:1318px;top:724.5px;width:215px;overflow:hidden;font-size:11.4px">0,00</div><div class="a" style="left:1192px;top:754px;width:341px;height:1px;background:#d4d4d4"></div><div class="t" style="left:1192px;top:741.1px;width:341px;text-align:center;font-size:11.6px;font-weight:bold">Свойства для расчета КЕО:</div><div class="a" style="left:1192px;top:771px;width:341px;height:1px;background:#d4d4d4"></div><div class="a" style="left:1315px;top:755px;width:1px;height:17px;background:#d4d4d4"></div><div class="t" style="left:1195px;top:757.7px;width:119px;overflow:hidden;font-size:11.4px">Светопропуск. материал</div><div class="t" style="left:1318px;top:757.7px;width:215px;overflow:hidden;font-size:11.4px">Стекло оконное листовое одинарное</div><div class="a" style="left:1192px;top:787px;width:341px;height:1px;background:#d4d4d4"></div><div class="a" style="left:1315px;top:771px;width:1px;height:17px;background:#d4d4d4"></div><div class="t" style="left:1195px;top:774.3px;width:119px;overflow:hidden;font-size:11.4px">Переплет</div><div class="t" style="left:1318px;top:774.3px;width:215px;overflow:hidden;font-size:11.4px">Деревянные одинарные</div><div class="a" style="left:1192px;top:804px;width:341px;height:1px;background:#d4d4d4"></div><div class="a" style="left:1315px;top:788px;width:1px;height:17px;background:#d4d4d4"></div><div class="t" style="left:1195px;top:790.9px;width:119px;overflow:hidden;font-size:11.4px">Солнцезащ. устр.</div><div class="t" style="left:1318px;top:790.9px;width:215px;overflow:hidden;font-size:11.4px">Горизонтальные многоступенчатые козырьки</div><div class="a" style="left:1192px;top:820px;width:341px;height:1px;background:#d4d4d4"></div><div class="a" style="left:1315px;top:804px;width:1px;height:17px;background:#d4d4d4"></div><div class="t" style="left:1195px;top:807.5px;width:119px;overflow:hidden;font-size:11.4px">Защит. угол козырька</div><div class="t" style="left:1318px;top:807.5px;width:215px;overflow:hidden;font-size:11.4px">15,00</div><div class="a" style="left:1192px;top:837px;width:341px;height:1px;background:#d4d4d4"></div><div class="a" style="left:1315px;top:821px;width:1px;height:17px;background:#d4d4d4"></div><div class="t" style="left:1195px;top:824.1px;width:119px;overflow:hidden;font-size:11.4px">Толщина стены</div><div class="t" style="left:1318px;top:824.1px;width:215px;overflow:hidden;font-size:11.4px">0,36</div><div class="a" style="left:1192px;top:854px;width:341px;height:1px;background:#d4d4d4"></div><div class="t" style="left:1192px;top:840.7px;width:341px;text-align:center;font-size:11.6px;font-weight:bold">Свойства для расчета шума:</div><div class="a" style="left:1192px;top:870px;width:341px;height:1px;background:#d4d4d4"></div><div class="a" style="left:1315px;top:854px;width:1px;height:17px;background:#d4d4d4"></div><div class="t" style="left:1195px;top:857.3px;width:119px;overflow:hidden;font-size:11.4px">Звукоизоляция</div><div class="t" style="left:1318px;top:857.3px;width:215px;overflow:hidden;font-size:11.4px">не задано</div><svg style="left:4px;top:50px" width="16" height="16" viewBox="0 0 16 16"><path d="M3 1.5 H10 L13.5 5 V14.5 H3 Z" fill="#fff" stroke="#1a6fb0" stroke-width="1.6"/><path d="M4 13 L12.5 6 V13.5 Z" fill="#cde8fb"/></svg><svg style="left:27px;top:50px" width="16" height="16" viewBox="0 0 16 16"><path d="M1 4 H6 L7 5.5 H13 V13 H1 Z" fill="#f0b020" stroke="#1a5f90" stroke-width="1.2"/><path d="M2.5 8 H15.5 L13 13.5 H1 Z" fill="#ffd030" stroke="#1a5f90" stroke-width="1.1"/></svg><svg style="left:60px;top:50px" width="16" height="16" viewBox="0 0 16 16"><path d="M2 2 H10 L12 4 V14 H2 Z" fill="#fff" stroke="#1a6fb0" stroke-width="1.4"/><path d="M5 9 L8 6 L11 9 V12 H5 Z" fill="#2a7ff0"/><path d="M9 15 L15 2" stroke="#111" stroke-width="2"/></svg><svg style="left:92px;top:50px" width="16" height="16" viewBox="0 0 16 16"><path d="M1 4 L5 1 L6 5" stroke="#f0e000" stroke-width="2.5" fill="none"/><path d="M5 7 H15 V15 H5 Z" fill="#0a3f9a"/><path d="M5 6 L7 4 L9 6 L11 4 L13 6 L15 4 V7 H5Z" fill="#1a7fe0"/><rect x="8" y="9" width="4" height="2" fill="#cde"/><rect x="8" y="12" width="4" height="2" fill="#cde"/></svg><svg style="left:115px;top:50px" width="16" height="16" viewBox="0 0 16 16"><path d="M2 2 L8 6 L14 2 M8 6 V8" stroke="#f0e000" stroke-width="2.5" fill="none"/><rect x="1" y="7" width="3" height="8" fill="#0a3f9a"/><rect x="12" y="7" width="3" height="8" fill="#0a3f9a"/><rect x="4" y="11" width="8" height="4" fill="#00e000"/></svg><svg style="left:139px;top:50px" width="16" height="16" viewBox="0 0 16 16"><rect x="1" y="1" width="5" height="6" fill="#f0f000"/><path d="M1 9 L6 12 L1 15Z" fill="#20d020"/><rect x="6" y="2" width="9" height="13" fill="#cfe8fb" stroke="#1a7fe0" stroke-width="2"/><rect x="10" y="4" width="1" height="10" fill="#1a7fe0"/></svg><svg style="left:163px;top:50px" width="16" height="16" viewBox="0 0 16 16"><rect x="1" y="1" width="14" height="14" fill="#1a6fe0"/><path d="M1 1 H15 L1 13 Z" fill="#7ab8f8"/><path d="M1 9 L7 12 L1 15Z" fill="#20d020"/><path d="M8 15 L15 8 V15Z" fill="#0a3f9a"/></svg><svg style="left:187px;top:50px" width="16" height="16" viewBox="0 0 16 16"><path d="M4 6 H7 L12 1 V15 L7 10 H4 Z" fill="#2b8ff0" stroke="#1060c0" stroke-width="0.8"/><path d="M13 4 L16 2 M14 8 L17 8 M13 12 L16 14" stroke="#22cc22" stroke-width="1.6"/><path d="M1 10 L5 12.5 L1 15Z" fill="#20d020"/></svg><svg style="left:211px;top:50px" width="16" height="16" viewBox="0 0 16 16"><rect x="2" y="2" width="12" height="12" rx="1" fill="#a0a0a0"/></svg><svg style="left:243px;top:50px" width="16" height="16" viewBox="0 0 16 16"><path d="M3 2 V14 H15" stroke="#1a7fe0" stroke-width="2" fill="none"/><path d="M1 4 L3 1 L5 4 M13 12 L16 14 L13 16" stroke="#1a7fe0" stroke-width="1.5" fill="none"/></svg><div class="a" style="left:264px;top:48px;width:23px;height:21px;background:#eef2f7;border:1px solid #c8d0da"></div><svg style="left:268px;top:50px" width="16" height="16" viewBox="0 0 16 16"><path d="M3 2 V14 H15 M3 14 L13 4" stroke="#1a7fe0" stroke-width="2" fill="none"/></svg><svg style="left:292px;top:50px" width="16" height="16" viewBox="0 0 16 16"><path d="M1 1 L4 6 L7 1" stroke="#e00" stroke-width="2" fill="none"/><path d="M6 5 H14 V11 L10 15 L6 11 Z" fill="#fff" stroke="#1a7fe0" stroke-width="1.6"/></svg><div class="a" style="left:319px;top:48px;width:23px;height:21px;background:#eef2f7;border:1px solid #c8d0da"></div><svg style="left:323px;top:50px" width="16" height="16" viewBox="0 0 16 16"><path d="M2 1 H14 V11 L8 15 L2 11 Z" fill="#fff" stroke="#1a7fe0" stroke-width="1.8"/><path d="M5 5 H11 M5 8 H11" stroke="#1a7fe0" stroke-width="1.4"/></svg><div class="a" style="left:351px;top:48px;width:23px;height:21px;background:#eef2f7;border:1px solid #c8d0da"></div><svg style="left:355px;top:50px" width="16" height="16" viewBox="0 0 16 16"><rect x="1" y="1" width="14" height="14" fill="#30b060" stroke="#1a5f90" stroke-width="1.4"/><path d="M2 2 L14 14" stroke="#e02020" stroke-width="1.5"/><path d="M4 14 L14 4" stroke="#f0c030" stroke-width="2"/><rect x="9" y="2" width="5" height="5" fill="#5ab0f0"/></svg><div class="a" style="left:375px;top:48px;width:23px;height:21px;background:#eef2f7;border:1px solid #c8d0da"></div><svg style="left:379px;top:50px" width="16" height="16" viewBox="0 0 16 16"><rect x="1" y="1" width="14" height="14" fill="#60b0a0" stroke="#1a5f90" stroke-width="1.4"/><rect x="3" y="3" width="5" height="5" fill="#f0e060"/><path d="M8 6 V14 M5 11 L8 14 L11 11" stroke="#1a7fe0" stroke-width="2" fill="none"/></svg><div class="a" style="left:52px;top:49px;width:1px;height:19px;background:#a8a8a8"></div><div class="a" style="left:84px;top:49px;width:1px;height:19px;background:#a8a8a8"></div><div class="a" style="left:236px;top:49px;width:1px;height:19px;background:#a8a8a8"></div><div class="a" style="left:316px;top:49px;width:1px;height:19px;background:#a8a8a8"></div><div class="a" style="left:348px;top:49px;width:1px;height:19px;background:#a8a8a8"></div><div class="a" style="left:403px;top:49px;width:1px;height:19px;background:#a8a8a8"></div><div class="a" style="left:488px;top:49px;width:1px;height:19px;background:#a8a8a8"></div><div class="a" style="left:409px;top:47px;width:74px;height:20px;background:#fff;border:1px solid #7a7a7a;border-right-color:#e0e0e0;border-bottom-color:#e0e0e0"></div><div class="t" style="left:411px;top:51px;font-size:12px">100%</div><div class="a" style="left:465px;top:48px;width:17px;height:18px;background:#e6e6e6;border:1px solid #b8b8b8"></div><svg style="left:469px;top:55px" width="9" height="5"><path d="M0 0 L9 0 L4.5 5 Z" fill="#000"/></svg><svg style="left:649px;top:106px" width="16" height="16" viewBox="0 0 16 16"><path d="M3 1.5 H10 L13.5 5 V14.5 H3 Z" fill="#fff" stroke="#1a6fb0" stroke-width="1.6"/><path d="M4 13 L12.5 6 V13.5 Z" fill="#cde8fb"/></svg><svg style="left:672px;top:106px" width="16" height="16" viewBox="0 0 16 16"><path d="M1 4 H6 L7 5.5 H13 V13 H1 Z" fill="#f0b020" stroke="#1a5f90" stroke-width="1.2"/><path d="M2.5 8 H15.5 L13 13.5 H1 Z" fill="#ffd030" stroke="#1a5f90" stroke-width="1.1"/></svg><svg style="left:697px;top:106px" width="16" height="16" viewBox="0 0 16 16"><path d="M2 3 H11 L14 6 V14 H2 Z" fill="#a8a8a8"/><rect x="4" y="9" width="8" height="3" fill="#d8d8d8"/></svg><svg style="left:728px;top:106px" width="16" height="16" viewBox="0 0 16 16"><path d="M1 1 H7 L9 3 V10 H1Z" fill="#fff" stroke="#1a7fe0" stroke-width="1.4"/><path d="M6 5 H12 L14 7 V15 H6Z" fill="#fff" stroke="#1a7fe0" stroke-width="1.4"/></svg><svg style="left:752px;top:106px" width="16" height="16" viewBox="0 0 16 16"><path d="M4 1 L11 11 M12 1 L5 11" stroke="#1a7fe0" stroke-width="1.6"/><circle cx="4" cy="13" r="2.2" fill="none" stroke="#1a7fe0" stroke-width="1.4"/><circle cx="12" cy="13" r="2.2" fill="none" stroke="#1a7fe0" stroke-width="1.4"/></svg><svg style="left:776px;top:106px" width="16" height="16" viewBox="0 0 16 16"><path d="M2 3 H11 V14 H2Z" fill="none" stroke="#a8a8a8" stroke-width="1.8"/><path d="M6 8 H14 L11 5 M14 8 L11 11" stroke="#a8a8a8" stroke-width="1.6" fill="none"/></svg><svg style="left:809px;top:106px" width="16" height="16" viewBox="0 0 16 16"><path d="M2 2 L14 14 M14 2 L2 14" stroke="#e01010" stroke-width="3"/></svg><svg style="left:841px;top:106px" width="16" height="16" viewBox="0 0 16 16"><path d="M14 14 C14 7 10 5 5 6 L6 2 L1 8 L7 12 L6 9 C10 8 13 10 14 14Z" fill="#1a6fe0"/></svg><svg style="left:865px;top:106px" width="16" height="16" viewBox="0 0 16 16"><path d="M2 14 C2 7 6 5 11 6 L10 2 L15 8 L9 12 L10 9 C6 8 3 10 2 14Z" fill="#a8a8a8"/></svg><svg style="left:897px;top:106px" width="16" height="16" viewBox="0 0 16 16"><path d="M8 1 V15 M1 8 H15 M8 1 L5 4 M8 1 L11 4 M8 15 L5 12 M8 15 L11 12 M1 8 L4 5 M1 8 L4 11 M15 8 L12 5 M15 8 L12 11" stroke="#1a7fe0" stroke-width="1.8" fill="none"/></svg><svg style="left:921px;top:106px" width="16" height="16" viewBox="0 0 16 16"><circle cx="8" cy="8" r="6" fill="#1a8fe8"/><path d="M4 6 C6 2 12 3 12 8" stroke="#fff" stroke-width="1.5" fill="none"/><path d="M12 12 L15 15" stroke="#0a3f9a" stroke-width="2"/></svg><svg style="left:945px;top:106px" width="16" height="16" viewBox="0 0 16 16"><path d="M1 3 L14 8 L1 13 Z" fill="#b0b0b0"/><path d="M1 8 H15" stroke="#d0d0d0" stroke-width="1"/></svg><svg style="left:969px;top:106px" width="16" height="16" viewBox="0 0 16 16"><path d="M7 2 L7 14 L1 14 Z" fill="#a8a8a8"/><path d="M9 2 L9 14 L15 14 Z" fill="#c8c8c8"/></svg><svg style="left:1001px;top:106px" width="16" height="16" viewBox="0 0 16 16"><path d="M2 5 L8 1 L14 5 V15 H2Z" fill="#1a7fe0"/><rect x="5" y="8" width="2" height="3" fill="#fff"/><rect x="9" y="8" width="2" height="3" fill="#fff"/></svg><svg style="left:1025px;top:106px" width="16" height="16" viewBox="0 0 16 16"><path d="M5 5 L10 1 L15 5 V15 H5Z" fill="#a8a8a8"/><path d="M1 9 H6 M4 7 L6 9 L4 11" stroke="#a8a8a8" stroke-width="1.5" fill="none"/></svg><svg style="left:1057px;top:106px" width="16" height="16" viewBox="0 0 16 16"><path d="M5 1 V7 M2 5 L5 8 L8 5" stroke="#10a010" stroke-width="2" fill="none"/><path d="M2 10 L9 7 L15 10 L9 13 Z" fill="#cfe8fb" stroke="#1a7fe0" stroke-width="1"/><path d="M2 10 V13 L9 16 L15 13 V10" fill="#9cc8ee"/></svg><svg style="left:1081px;top:106px" width="16" height="16" viewBox="0 0 16 16"><path d="M5 8 V2 M2 4 L5 1 L8 4" stroke="#10a010" stroke-width="2" fill="none"/><path d="M2 10 L9 7 L15 10 L9 13 Z" fill="#cfe8fb" stroke="#1a7fe0" stroke-width="1"/><path d="M2 10 V13 L9 16 L15 13 V10" fill="#9cc8ee"/></svg><svg style="left:1112px;top:106px" width="16" height="16" viewBox="0 0 16 16"><path d="M2 3 H12 M2 13 H12 M12 3 V13" stroke="#1a7fe0" stroke-width="1.8" fill="none"/><path d="M1 6 H6 M1 10 H6" stroke="#1a6fb0" stroke-width="1.4"/></svg><svg style="left:1136px;top:106px" width="16" height="16" viewBox="0 0 16 16"><path d="M1 8 H10" stroke="#1a7fe0" stroke-width="1.6"/><rect x="9" y="4" width="6" height="7" fill="#fff" stroke="#1a7fe0" stroke-width="1.4"/><path d="M12 11 V15" stroke="#1a7fe0" stroke-width="1.6"/></svg><div class="a" style="left:1164px;top:104px;width:23px;height:21px;background:#eef2f7;border:1px solid #c8d0da"></div><svg style="left:1168px;top:106px" width="16" height="16" viewBox="0 0 16 16"><path d="M2 1 H14 V11 L8 15 L2 11 Z" fill="#fff" stroke="#1a7fe0" stroke-width="1.8"/><path d="M5 5 H11 M5 8 H11" stroke="#1a7fe0" stroke-width="1.4"/></svg><div class="a" style="left:721px;top:105px;width:1px;height:19px;background:#a8a8a8"></div><div class="a" style="left:801px;top:105px;width:1px;height:19px;background:#a8a8a8"></div><div class="a" style="left:833px;top:105px;width:1px;height:19px;background:#a8a8a8"></div><div class="a" style="left:889px;top:105px;width:1px;height:19px;background:#a8a8a8"></div><div class="a" style="left:993px;top:105px;width:1px;height:19px;background:#a8a8a8"></div><div class="a" style="left:1050px;top:105px;width:1px;height:19px;background:#a8a8a8"></div><div class="a" style="left:1105px;top:105px;width:1px;height:19px;background:#a8a8a8"></div><div class="a" style="left:1161px;top:105px;width:1px;height:19px;background:#a8a8a8"></div><div class="a" style="left:1191px;top:105px;width:1px;height:19px;background:#a8a8a8"></div><div class="a" style="left:648px;top:403px;width:23px;height:24px;background:#eef2f7;border:1px solid #c8d0da"></div><svg style="left:651px;top:130px" width="16" height="16" viewBox="0 0 16 16"><path d="M3 1 V15 L6.5 11.5 L9 16 L11 15 L8.5 10.5 H13 Z" fill="#111"/></svg><svg style="left:651px;top:154px" width="16" height="16" viewBox="0 0 16 16"><path d="M1 3 H5 M3 1 V5" stroke="#1a7fe0" stroke-width="1.6"/><path d="M4 6 H15 V15 H4Z" fill="#1a7fe0"/><rect x="7" y="9" width="5" height="2" fill="#fff"/><path d="M4 6 L7 3 H15 V6" fill="#0a3f9a"/></svg><svg style="left:651px;top:177px" width="16" height="16" viewBox="0 0 16 16"><path d="M1 3 H5 M3 1 V5" stroke="#1a7fe0" stroke-width="1.6"/><path d="M3 10 L10 7 L16 10 L10 13 Z" fill="#cfe8fb" stroke="#1a7fe0" stroke-width="1"/><path d="M3 10 V13 L10 16 L16 13 V10" fill="#9cc8ee"/></svg><svg style="left:651px;top:206px" width="16" height="16" viewBox="0 0 16 16"><path d="M1 3 H13 V11 L7 15 L1 11 Z" fill="#fff" stroke="#1a7fe0" stroke-width="2"/><path d="M12 1 V7 M9 4 H15" stroke="#1a7fe0" stroke-width="1.6"/></svg><svg style="left:651px;top:230px" width="16" height="16" viewBox="0 0 16 16"><path d="M2 2 H14 V11 L8 15 L2 11 Z" fill="#fff" stroke="#b0b0b0" stroke-width="1.8"/></svg><svg style="left:651px;top:252px" width="16" height="16" viewBox="0 0 16 16"><text x="1" y="10" font-family="Liberation Sans" font-weight="bold" font-size="10" fill="#111">1:1</text><path d="M1 13 H15 M1 11 V15 M15 11 V15" stroke="#1a7fe0" stroke-width="1.4"/></svg><svg style="left:651px;top:284px" width="16" height="16" viewBox="0 0 16 16"><rect x="1" y="1" width="14" height="14" fill="#8c8c8c"/></svg><svg style="left:651px;top:307px" width="16" height="16" viewBox="0 0 16 16"><rect x="2" y="2" width="12" height="12" fill="#cfe8fb" stroke="#1a7fe0" stroke-width="2.2"/></svg><svg style="left:651px;top:330px" width="16" height="16" viewBox="0 0 16 16"><rect x="1" y="1" width="14" height="14" fill="#cfe8fb" stroke="#9cc8ee" stroke-width="1"/><rect x="5" y="5" width="6" height="6" fill="#fff" stroke="#1a7fe0" stroke-width="2"/></svg><svg style="left:651px;top:360px" width="16" height="16" viewBox="0 0 16 16"><rect x="1" y="1" width="5" height="5" fill="#f0f000"/><path d="M1 11 H6 M3.5 8.5 V13.5" stroke="#1a7fe0" stroke-width="1.5"/><rect x="6" y="2" width="9" height="13" fill="#cfe8fb" stroke="#1a7fe0" stroke-width="2"/><rect x="10" y="4" width="1" height="10" fill="#1a7fe0"/></svg><svg style="left:651px;top:384px" width="16" height="16" viewBox="0 0 16 16"><path d="M5 1 C9 3 9 6 9 15" stroke="#1a7fe0" stroke-width="2.5" fill="none"/><path d="M9 15 L15 9 V15 Z" fill="#555"/></svg><svg style="left:651px;top:407px" width="16" height="16" viewBox="0 0 16 16"><rect x="1" y="11" width="3" height="3" fill="#e00"/><rect x="6" y="2" width="9" height="13" fill="#cfe8fb" stroke="#1a7fe0" stroke-width="2"/><rect x="10" y="4" width="1" height="10" fill="#1a7fe0"/></svg><svg style="left:651px;top:437px" width="16" height="16" viewBox="0 0 16 16"><path d="M3 4 H14 V11 L9 15 L3 11Z" fill="#fff" stroke="#b0b0b0" stroke-width="1.6"/><path d="M1 3 H5 M3 1 V5" stroke="#b0b0b0" stroke-width="1.2"/></svg><svg style="left:651px;top:461px" width="16" height="16" viewBox="0 0 16 16"><path d="M3 4 H14 V11 L9 15 L3 11Z" fill="#fff" stroke="#b0b0b0" stroke-width="1.6"/><path d="M1 3 H5 M3 1 V5" stroke="#b0b0b0" stroke-width="1.2"/></svg><svg style="left:651px;top:484px" width="16" height="16" viewBox="0 0 16 16"><path d="M2 2 H14 V11 L8 15 L2 11 Z" fill="#fff" stroke="#b0b0b0" stroke-width="1.8"/></svg><svg style="left:651px;top:506px" width="16" height="16" viewBox="0 0 16 16"><path d="M2 2 H14 V11 L8 15 L2 11 Z" fill="#fff" stroke="#1a7fe0" stroke-width="1.8"/><path d="M6 4 L12 12" stroke="#e02020" stroke-width="1.5"/><circle cx="12" cy="12" r="3" fill="#5ab0f0"/></svg><svg style="left:651px;top:538px" width="16" height="16" viewBox="0 0 16 16"><path d="M1 12 H15 M1 10 V14 M15 10 V14" stroke="#111" stroke-width="1.4"/><path d="M8 2 V8 M5 5 H11" stroke="#1a7fe0" stroke-width="1.6"/><circle cx="8" cy="12" r="2" fill="#1a7fe0"/></svg><svg style="left:651px;top:561px" width="16" height="16" viewBox="0 0 16 16"><path d="M1 12 H15 M1 10 V14 M15 10 V14 M4 5 H12 M4 8 H12" stroke="#b0b0b0" stroke-width="1.4"/></svg><svg style="left:651px;top:592px" width="16" height="16" viewBox="0 0 16 16"><rect x="1" y="1" width="5" height="5" fill="#f0f000"/><rect x="4" y="3" width="11" height="12" fill="#cfe8fb" stroke="#1a7fe0" stroke-width="2"/><path d="M2 10 H8 M5 7 V13" stroke="#1a7fe0" stroke-width="1.5"/></svg><svg style="left:651px;top:622px" width="16" height="16" viewBox="0 0 16 16"><rect x="3" y="1" width="10" height="14" fill="#fff" stroke="#1a7fe0" stroke-width="1.8"/><path d="M8 1 V15" stroke="#1a7fe0" stroke-width="1.2"/></svg><svg style="left:651px;top:646px" width="16" height="16" viewBox="0 0 16 16"><path d="M8 1 L15 8 L8 15 L1 8Z" fill="#cfe8fb" stroke="#1a7fe0" stroke-width="1.6"/><path d="M1 8 H15 M8 1 V15" stroke="#1a7fe0" stroke-width="1"/></svg><svg style="left:651px;top:669px" width="16" height="16" viewBox="0 0 16 16"><rect x="1" y="1" width="14" height="14" rx="3" fill="#cfe8fb" stroke="#1a7fe0" stroke-width="1.6"/><path d="M8 3 V13 M3 8 H13 M4 4 L12 12 M12 4 L4 12" stroke="#1a7fe0" stroke-width="1.2"/></svg><svg style="left:651px;top:700px" width="16" height="16" viewBox="0 0 16 16"><rect x="1" y="2" width="14" height="12" fill="#a0a0a0"/><rect x="3" y="4" width="3" height="8" fill="#fff"/><rect x="10" y="4" width="3" height="8" fill="#fff"/></svg><svg style="left:651px;top:723px" width="16" height="16" viewBox="0 0 16 16"><circle cx="9" cy="9" r="6" fill="#a0a0a0"/><path d="M1 4 H5 M3 2 V6" stroke="#a0a0a0" stroke-width="1.4"/></svg><svg style="left:651px;top:746px" width="16" height="16" viewBox="0 0 16 16"><circle cx="8" cy="8" r="6.5" fill="#a0a0a0"/><rect x="1" y="6" width="4" height="4" fill="#c0c0c0"/></svg><svg style="left:651px;top:770px" width="16" height="16" viewBox="0 0 16 16"><path d="M2 14 L8 2 L14 14" stroke="#b0b0b0" stroke-width="1.5" fill="none"/><path d="M4 9 H12 M3 12 H13" stroke="#b0b0b0" stroke-width="1.4"/></svg><svg style="left:651px;top:798px" width="16" height="16" viewBox="0 0 16 16"><rect x="1" y="5" width="14" height="6" fill="#f0e040" stroke="#e03020" stroke-width="1"/><path d="M3 8 V11 M6 8 V11 M9 8 V11 M12 8 V11" stroke="#333" stroke-width="0.8"/></svg><div class="a" style="left:650px;top:200px;width:19px;height:1px;background:#a8a8a8"></div><div class="a" style="left:650px;top:276px;width:19px;height:1px;background:#a8a8a8"></div><div class="a" style="left:650px;top:353px;width:19px;height:1px;background:#a8a8a8"></div><div class="a" style="left:650px;top:430px;width:19px;height:1px;background:#a8a8a8"></div><div class="a" style="left:650px;top:530px;width:19px;height:1px;background:#a8a8a8"></div><div class="a" style="left:650px;top:585px;width:19px;height:1px;background:#a8a8a8"></div><div class="a" style="left:650px;top:615px;width:19px;height:1px;background:#a8a8a8"></div><div class="a" style="left:650px;top:693px;width:19px;height:1px;background:#a8a8a8"></div><div class="a" style="left:650px;top:792px;width:19px;height:1px;background:#a8a8a8"></div>
</body></html>
